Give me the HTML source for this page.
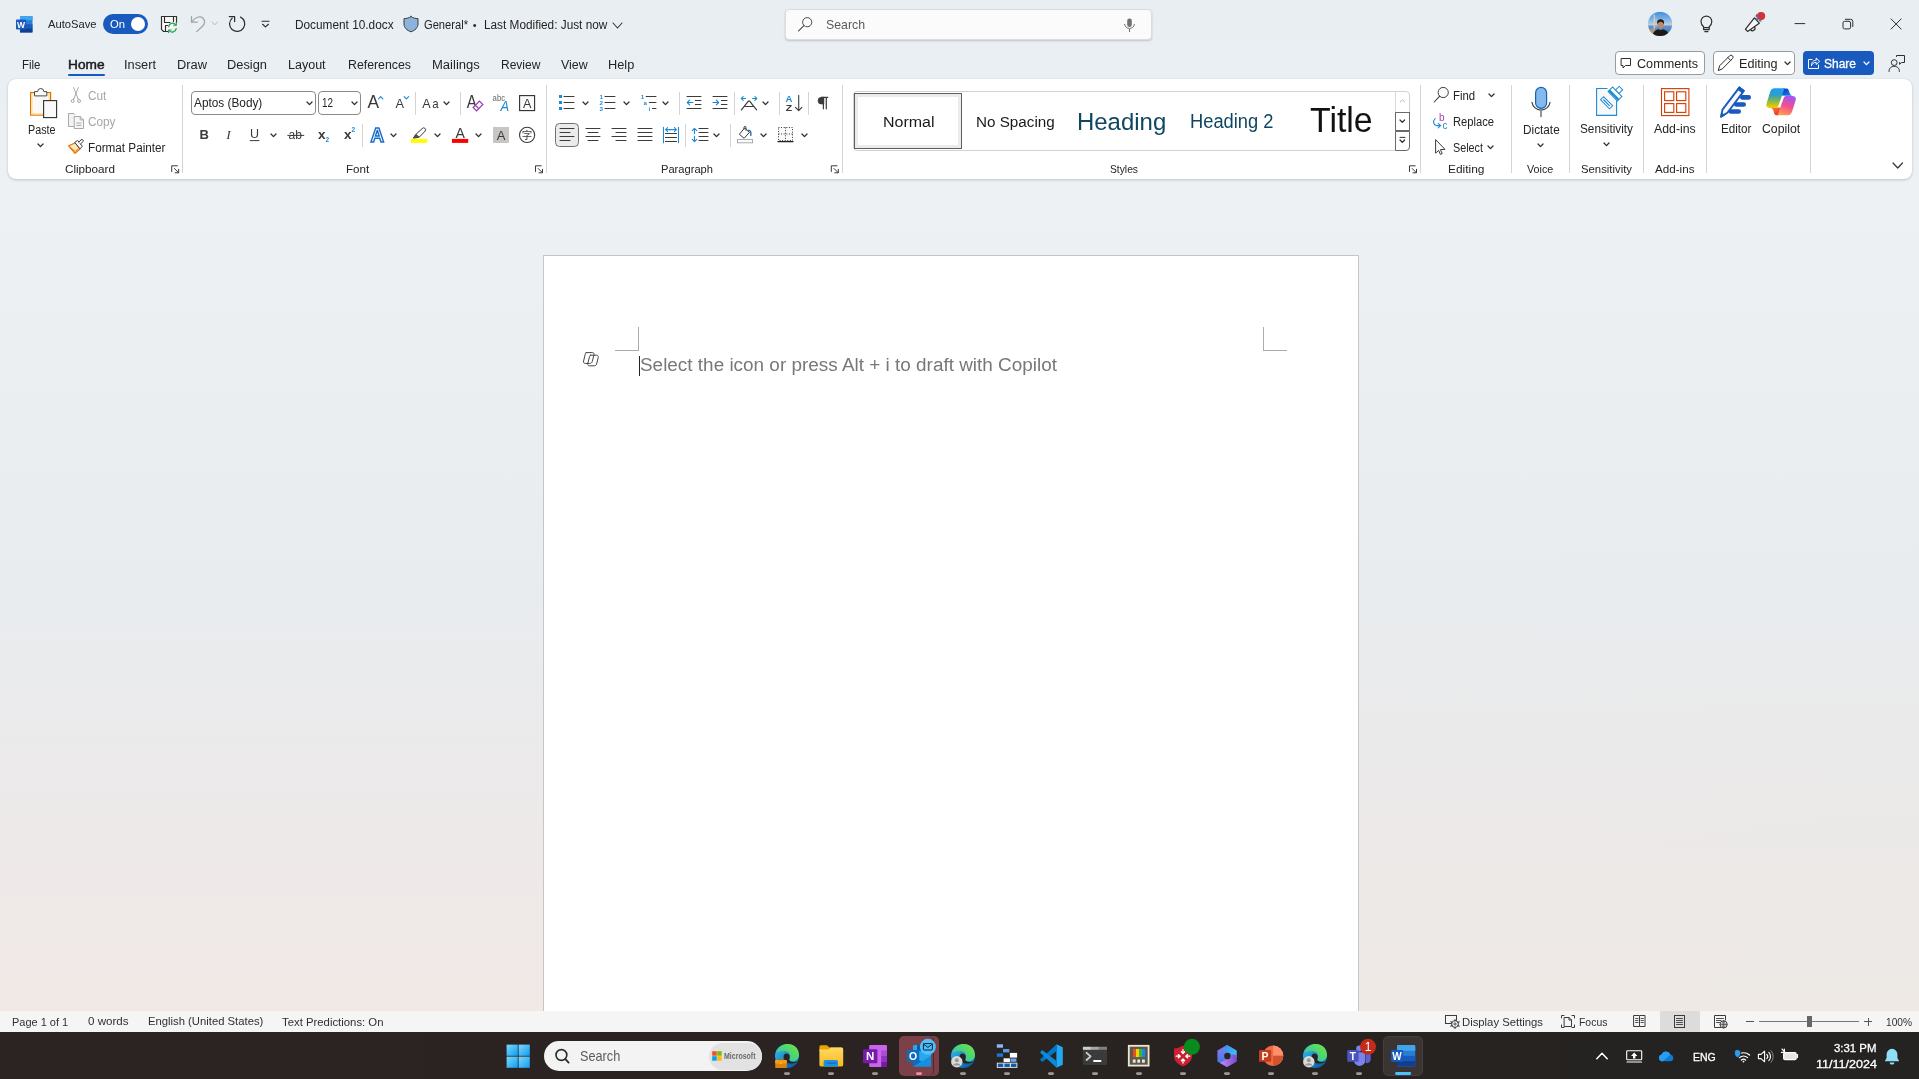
<!DOCTYPE html>
<html lang="en"><head><meta charset="utf-8"><title>Document 10.docx - Word</title>
<style>
html,body{margin:0;padding:0;}
body{width:1919px;height:1079px;overflow:hidden;position:relative;font-family:"Liberation Sans",sans-serif;
background:radial-gradient(ellipse 1300px 520px at 100% 1011px,rgba(226,233,225,.22),rgba(226,233,225,0)),linear-gradient(180deg,#e9eef3 0px,#eaeff3 80px,#edf1f3 190px,#e9ecef 600px,#ede9e9 830px,#f1e9e6 1011px);}
.t{position:absolute;white-space:nowrap;line-height:normal;transform-origin:0 0;}
#root{position:absolute;left:0;top:0;width:1919px;height:1079px;will-change:transform;}
.b{position:absolute;box-sizing:border-box;}
svg{overflow:visible;}
</style></head><body><div id="root">

<div class="b" style="left:8px;top:79px;width:1904px;height:100px;background:#fff;border-radius:8px;box-shadow:0 1px 3px rgba(0,0,0,.18),0 0 1px rgba(0,0,0,.15);"></div>
<div class="b" style="left:543px;top:255px;width:816px;height:760px;background:#fff;border:1px solid #c6c6c6;"></div>
<div class="b" style="left:638px;top:327px;width:1px;height:24px;background:#ababab;"></div>
<div class="b" style="left:615px;top:350px;width:24px;height:1px;background:#ababab;"></div>
<div class="b" style="left:1263px;top:327px;width:1px;height:24px;background:#ababab;"></div>
<div class="b" style="left:1263px;top:350px;width:24px;height:1px;background:#ababab;"></div>
<div class="b" style="left:639px;top:356px;width:1px;height:20px;background:#222;"></div>
<div class="t" style="left:640.00px;top:355px;font-size:18px;color:#787878;transform:scaleX(1.0512);">Select the icon or press Alt + i to draft with Copilot</div>
<div class="b" style="left:0px;top:1011px;width:1919px;height:21px;background:#f5f5f5;"></div>
<div class="b" style="left:0px;top:1032px;width:1919px;height:47px;background:linear-gradient(90deg,#2b2422 0,#2a2321 45%,#262321 75%,#242321 100%);"></div>
<svg class="b" style="left:16px;top:16px;" width="17" height="17" viewBox="0 0 17 17" fill="none"><rect x="4" y="0" width="12.5" height="16.5" rx="1" fill="#2b7cd3"/>
<rect x="4" y="0" width="12.5" height="4.2" fill="#41a5ee"/><rect x="4" y="8.3" width="12.5" height="4.2" fill="#185abd"/><rect x="4" y="12.4" width="12.5" height="4.1" fill="#103f91"/>
<rect x="0" y="3.5" width="10" height="10" rx="1" fill="#185abd"/>
<text x="5" y="11.6" font-family="Liberation Sans, sans-serif" font-size="8.5" font-weight="700" fill="#fff" text-anchor="middle">W</text></svg>
<div class="t" style="left:47.50px;top:18px;font-size:11px;color:#242424;transform:scaleX(1.0167);">AutoSave</div>
<div class="b" style="left:103px;top:13.5px;width:45px;height:20px;background:#185abd;border-radius:10px;"></div>
<div class="t" style="left:110.00px;top:18px;font-size:11px;color:#fff;transform:scaleX(1.0213);">On</div>
<div class="b" style="left:131px;top:17px;width:14px;height:14px;background:#fff;border-radius:7px;"></div>
<div class="t" style="left:295.40px;top:18px;font-size:12px;color:#242424;transform:scaleX(0.9854);">Document 10.docx</div>
<div class="t" style="left:423.50px;top:18px;font-size:12px;color:#242424;transform:scaleX(0.9288);">General*</div>
<div class="t" style="left:472.80px;top:19px;font-size:11px;color:#242424;">•</div>
<div class="t" style="left:483.50px;top:18px;font-size:12px;color:#242424;transform:scaleX(0.9832);">Last Modified: Just now</div>
<svg class="b" style="left:611.5px;top:21.5px;" width="11" height="7" viewBox="0 0 11 7" fill="none"><path d="M1 1 L5.5 6 L10 1" stroke="#333" stroke-width="1.1" stroke-linecap="round" stroke-linejoin="round"/></svg>
<div class="b" style="left:785px;top:8.5px;width:366.5px;height:31px;background:#fbfbfb;border:1px solid #dcdcdc;border-radius:4px;box-shadow:0 1px 2px rgba(0,0,0,.18);"></div>
<div class="t" style="left:826.00px;top:17px;font-size:13px;color:#5a5a5a;transform:scaleX(0.9465);">Search</div>
<div class="b" style="left:1615px;top:51px;width:90px;height:24px;background:#fff;border:1px solid #9a9a9a;border-radius:4px;"></div>
<div class="t" style="left:1636.60px;top:57px;font-size:12.5px;color:#242424;transform:scaleX(1.0093);">Comments</div>
<div class="b" style="left:1713px;top:51px;width:82px;height:24px;background:#fff;border:1px solid #9a9a9a;border-radius:4px;"></div>
<div class="t" style="left:1738.70px;top:57px;font-size:12.5px;color:#242424;transform:scaleX(1.0096);">Editing</div>
<svg class="b" style="left:1784.0px;top:61.2px;" width="7" height="4.6" viewBox="0 0 7 4.6" fill="none"><path d="M1 1 L3.5 3.6 L6 1" stroke="#2e2e2e" stroke-width="1.3" stroke-linecap="round" stroke-linejoin="round"/></svg>
<div class="b" style="left:1803px;top:51px;width:71px;height:24px;background:#185abd;border-radius:4px;"></div>
<div class="t" style="left:1824.00px;top:57px;font-size:12.5px;color:#fff;transform:scaleX(0.9593);-webkit-text-stroke:0.3px #fff;">Share</div>
<svg class="b" style="left:1863.1px;top:61.2px;" width="7" height="4.6" viewBox="0 0 7 4.6" fill="none"><path d="M1 1 L3.5 3.6 L6 1" stroke="#fff" stroke-width="1.3" stroke-linecap="round" stroke-linejoin="round"/></svg>
<div class="t" style="left:22.30px;top:58px;font-size:12px;color:#242424;transform:scaleX(0.9564);">File</div>
<div class="t" style="left:124.00px;top:58px;font-size:12px;color:#242424;transform:scaleX(1.0661);">Insert</div>
<div class="t" style="left:177.00px;top:58px;font-size:12px;color:#242424;transform:scaleX(1.0708);">Draw</div>
<div class="t" style="left:227.00px;top:58px;font-size:12px;color:#242424;transform:scaleX(1.0707);">Design</div>
<div class="t" style="left:288.40px;top:58px;font-size:12px;color:#242424;transform:scaleX(1.0435);">Layout</div>
<div class="t" style="left:347.50px;top:58px;font-size:12px;color:#242424;transform:scaleX(1.0265);">References</div>
<div class="t" style="left:431.60px;top:58px;font-size:12px;color:#242424;transform:scaleX(1.0860);">Mailings</div>
<div class="t" style="left:501.40px;top:58px;font-size:12px;color:#242424;transform:scaleX(1.0010);">Review</div>
<div class="t" style="left:561.00px;top:58px;font-size:12px;color:#242424;transform:scaleX(1.0350);">View</div>
<div class="t" style="left:608.30px;top:58px;font-size:12px;color:#242424;transform:scaleX(1.0653);">Help</div>
<div class="t" style="left:67.50px;top:58px;font-size:12px;color:#1b1b1b;transform:scaleX(1.1401);-webkit-text-stroke:0.45px #1b1b1b;">Home</div>
<div class="b" style="left:67.5px;top:74.2px;width:37px;height:2px;background:#185abd;border-radius:1px;"></div>
<div class="b" style="left:182px;top:84.5px;width:1px;height:88.0px;background:#d4d4d4;"></div>
<div class="b" style="left:546px;top:84.5px;width:1px;height:88.0px;background:#d4d4d4;"></div>
<div class="b" style="left:842px;top:84.5px;width:1px;height:88.0px;background:#d4d4d4;"></div>
<div class="b" style="left:1420px;top:84.5px;width:1px;height:88.0px;background:#d4d4d4;"></div>
<div class="b" style="left:1511px;top:84.5px;width:1px;height:88.0px;background:#d4d4d4;"></div>
<div class="b" style="left:1569px;top:84.5px;width:1px;height:88.0px;background:#d4d4d4;"></div>
<div class="b" style="left:1643px;top:84.5px;width:1px;height:88.0px;background:#d4d4d4;"></div>
<div class="b" style="left:1706px;top:84.5px;width:1px;height:88.0px;background:#d4d4d4;"></div>
<div class="b" style="left:1810px;top:84.5px;width:1px;height:88.0px;background:#d4d4d4;"></div>
<div class="b" style="left:415px;top:91.5px;width:1px;height:23.0px;background:#d4d4d4;"></div>
<div class="b" style="left:460px;top:91.5px;width:1px;height:23.0px;background:#d4d4d4;"></div>
<div class="b" style="left:679px;top:91.5px;width:1px;height:23.0px;background:#d4d4d4;"></div>
<div class="b" style="left:734px;top:91.5px;width:1px;height:23.0px;background:#d4d4d4;"></div>
<div class="b" style="left:779px;top:91.5px;width:1px;height:23.0px;background:#d4d4d4;"></div>
<div class="b" style="left:808px;top:91.5px;width:1px;height:23.0px;background:#d4d4d4;"></div>
<div class="b" style="left:362px;top:123.5px;width:1px;height:23.0px;background:#d4d4d4;"></div>
<div class="b" style="left:685px;top:123.5px;width:1px;height:23.0px;background:#d4d4d4;"></div>
<div class="b" style="left:730px;top:123.5px;width:1px;height:23.0px;background:#d4d4d4;"></div>
<div class="t" style="left:64.70px;top:163px;font-size:11px;color:#242424;transform:scaleX(1.0617);">Clipboard</div>
<div class="t" style="left:345.50px;top:163px;font-size:11px;color:#242424;transform:scaleX(1.0538);">Font</div>
<div class="t" style="left:660.50px;top:163px;font-size:11px;color:#242424;transform:scaleX(1.0122);">Paragraph</div>
<div class="t" style="left:1109.50px;top:163px;font-size:11px;color:#242424;transform:scaleX(0.9343);">Styles</div>
<div class="t" style="left:1448.00px;top:163px;font-size:11px;color:#242424;transform:scaleX(1.0850);">Editing</div>
<div class="t" style="left:1527.00px;top:163px;font-size:11px;color:#242424;transform:scaleX(0.9769);">Voice</div>
<div class="t" style="left:1581.00px;top:163px;font-size:11px;color:#242424;transform:scaleX(1.0297);">Sensitivity</div>
<div class="t" style="left:1655.00px;top:163px;font-size:11px;color:#242424;transform:scaleX(1.0591);">Add-ins</div>
<div class="t" style="left:27.50px;top:123px;font-size:12px;color:#242424;transform:scaleX(0.8961);">Paste</div>
<svg class="b" style="left:37.0px;top:142.7px;" width="7" height="4.6" viewBox="0 0 7 4.6" fill="none"><path d="M1 1 L3.5 3.6 L6 1" stroke="#2e2e2e" stroke-width="1.3" stroke-linecap="round" stroke-linejoin="round"/></svg>
<div class="t" style="left:88.30px;top:89px;font-size:12px;color:#a6a6a6;transform:scaleX(0.9793);">Cut</div>
<div class="t" style="left:88.30px;top:115px;font-size:12px;color:#a6a6a6;transform:scaleX(0.9816);">Copy</div>
<div class="t" style="left:88.30px;top:141px;font-size:12px;color:#242424;transform:scaleX(0.9766);">Format Painter</div>
<div class="b" style="left:191px;top:91.3px;width:124.5px;height:23.4px;background:#fff;border:1px solid #8a8a8a;border-radius:4px;"></div>
<div class="t" style="left:194.20px;top:96px;font-size:12px;color:#242424;transform:scaleX(0.9845);">Aptos (Body)</div>
<svg class="b" style="left:305.5px;top:101.2px;" width="7" height="4.6" viewBox="0 0 7 4.6" fill="none"><path d="M1 1 L3.5 3.6 L6 1" stroke="#2e2e2e" stroke-width="1.3" stroke-linecap="round" stroke-linejoin="round"/></svg>
<div class="b" style="left:318px;top:91.3px;width:43px;height:23.4px;background:#fff;border:1px solid #8a8a8a;border-radius:4px;"></div>
<div class="t" style="left:322.20px;top:96px;font-size:12px;color:#242424;transform:scaleX(0.8234);">12</div>
<svg class="b" style="left:350.5px;top:101.2px;" width="7" height="4.6" viewBox="0 0 7 4.6" fill="none"><path d="M1 1 L3.5 3.6 L6 1" stroke="#2e2e2e" stroke-width="1.3" stroke-linecap="round" stroke-linejoin="round"/></svg>
<div class="b" style="left:853px;top:91px;width:557px;height:60px;background:#fff;border:1px solid #d2d2d2;border-radius:4px;"></div>
<div class="b" style="left:854px;top:93px;width:108px;height:56px;background:#fff;border:1px solid #5f5f5f;box-shadow:inset 0 0 0 3px #ebebeb;"></div>
<div class="t" style="left:882.50px;top:113px;font-size:15.5px;color:#1a1a1a;transform:scaleX(1.0310);">Normal</div>
<div class="t" style="left:976.30px;top:113px;font-size:15.5px;color:#1a1a1a;transform:scaleX(0.9820);">No Spacing</div>
<div class="t" style="left:1076.70px;top:108px;font-size:24.5px;color:#0f4761;transform:scaleX(0.9774);">Heading</div>
<div class="t" style="left:1190.30px;top:110px;font-size:19.5px;color:#0f4761;transform:scaleX(0.9381);">Heading 2</div>
<div class="t" style="left:1310.30px;top:101px;font-size:34.5px;color:#111;transform:scaleX(0.9811);">Title</div>
<div class="b" style="left:1395px;top:92px;width:1px;height:20px;background:#d8d8d8;"></div>
<div class="b" style="left:1395px;top:112px;width:15px;height:19px;background:#fff;border:1px solid #6a6a6a;"></div>
<div class="b" style="left:1395px;top:131px;width:15px;height:20px;background:#fff;border:1px solid #6a6a6a;border-radius:0 0 4px 0;"></div>
<div class="t" style="left:1453.30px;top:89px;font-size:12px;color:#242424;transform:scaleX(0.9510);">Find</div>
<svg class="b" style="left:1488.0px;top:93.2px;" width="7" height="4.6" viewBox="0 0 7 4.6" fill="none"><path d="M1 1 L3.5 3.6 L6 1" stroke="#2e2e2e" stroke-width="1.3" stroke-linecap="round" stroke-linejoin="round"/></svg>
<div class="t" style="left:1453.30px;top:115px;font-size:12px;color:#242424;transform:scaleX(0.9312);">Replace</div>
<div class="t" style="left:1453.30px;top:141px;font-size:12px;color:#242424;transform:scaleX(0.8993);">Select</div>
<svg class="b" style="left:1487.1px;top:145.0px;" width="7" height="4.6" viewBox="0 0 7 4.6" fill="none"><path d="M1 1 L3.5 3.6 L6 1" stroke="#2e2e2e" stroke-width="1.3" stroke-linecap="round" stroke-linejoin="round"/></svg>
<div class="t" style="left:1522.50px;top:123px;font-size:12px;color:#242424;transform:scaleX(0.9824);">Dictate</div>
<svg class="b" style="left:1536.7px;top:143.2px;" width="7" height="4.6" viewBox="0 0 7 4.6" fill="none"><path d="M1 1 L3.5 3.6 L6 1" stroke="#2e2e2e" stroke-width="1.3" stroke-linecap="round" stroke-linejoin="round"/></svg>
<div class="t" style="left:1580.00px;top:122px;font-size:12px;color:#242424;transform:scaleX(0.9809);">Sensitivity</div>
<svg class="b" style="left:1602.8px;top:142.39999999999998px;" width="7" height="4.6" viewBox="0 0 7 4.6" fill="none"><path d="M1 1 L3.5 3.6 L6 1" stroke="#2e2e2e" stroke-width="1.3" stroke-linecap="round" stroke-linejoin="round"/></svg>
<div class="t" style="left:1654.20px;top:122px;font-size:12px;color:#242424;transform:scaleX(1.0249);">Add-ins</div>
<div class="t" style="left:1720.50px;top:122px;font-size:12px;color:#242424;transform:scaleX(0.9726);">Editor</div>
<div class="t" style="left:1761.60px;top:122px;font-size:12px;color:#242424;transform:scaleX(1.0225);">Copilot</div>
<svg class="b" style="left:1891.75px;top:162.0px;" width="11.5" height="7" viewBox="0 0 11.5 7" fill="none"><path d="M1 1 L5.75 6 L10.5 1" stroke="#333" stroke-width="1.2" stroke-linecap="round" stroke-linejoin="round"/></svg>
<div class="t" style="left:11.50px;top:1016px;font-size:11px;color:#303030;transform:scaleX(0.9986);">Page 1 of 1</div>
<div class="t" style="left:88.00px;top:1015px;font-size:11px;color:#303030;transform:scaleX(1.0537);">0 words</div>
<div class="t" style="left:148.40px;top:1015px;font-size:11px;color:#303030;transform:scaleX(1.0249);">English (United States)</div>
<div class="t" style="left:282.00px;top:1016px;font-size:11px;color:#303030;transform:scaleX(1.0311);">Text Predictions: On</div>
<div class="t" style="left:1462.40px;top:1016px;font-size:11px;color:#303030;transform:scaleX(1.0269);">Display Settings</div>
<div class="t" style="left:1578.60px;top:1016px;font-size:11px;color:#303030;transform:scaleX(0.9477);">Focus</div>
<div class="b" style="left:1660px;top:1011px;width:40px;height:21px;background:#dcdcdc;"></div>
<div class="t" style="left:1885.50px;top:1016px;font-size:11px;color:#303030;transform:scaleX(0.9239);">100%</div>
<div class="b" style="left:1746px;top:1021px;width:8px;height:1px;background:#555;"></div>
<div class="b" style="left:1759px;top:1021px;width:100px;height:1px;background:#777;"></div>
<div class="b" style="left:1807px;top:1016px;width:5px;height:11px;background:#666;"></div>
<div class="b" style="left:1864px;top:1021px;width:8px;height:1px;background:#555;"></div>
<div class="b" style="left:1867.5px;top:1017.5px;width:1px;height:8px;background:#555;"></div>
<div class="b" style="left:544px;top:1041px;width:218px;height:30px;background:#f3f3f3;border-radius:15px;"></div>
<div class="t" style="left:580.30px;top:1048px;font-size:14.5px;color:#5c5c5c;transform:scaleX(0.8748);">Search</div>
<div class="b" style="left:708.5px;top:1042.5px;width:53px;height:27px;background:#e2e2e2;border-radius:13.5px;"></div>
<div class="t" style="left:723.80px;top:1051px;font-size:9px;color:#6a6a6a;font-weight:700;transform:scaleX(0.7778);">Microsoft</div>
<div class="t" style="left:1692.60px;top:1051px;font-size:11.5px;color:#fff;transform:scaleX(0.9149);-webkit-text-stroke:0.3px #fff;">ENG</div>
<div class="t" style="left:1833.90px;top:1042px;font-size:11.5px;color:#fff;transform:scaleX(0.9900);-webkit-text-stroke:0.3px #fff;">3:31 PM</div>
<div class="t" style="left:1815.80px;top:1058px;font-size:11.5px;color:#fff;transform:scaleX(1.0920);-webkit-text-stroke:0.3px #fff;">11/11/2024</div>
<svg class="b" style="left:210.55px;top:21.0px;" width="7.5" height="4.8" viewBox="0 0 7.5 4.8" fill="none"><path d="M1 1 L3.75 3.8 L6.5 1" stroke="#b5b5b5" stroke-width="1" stroke-linecap="round" stroke-linejoin="round"/></svg>
<svg class="b" style="left:442.9px;top:101.2px;" width="7" height="4.6" viewBox="0 0 7 4.6" fill="none"><path d="M1 1 L3.5 3.6 L6 1" stroke="#2e2e2e" stroke-width="1.3" stroke-linecap="round" stroke-linejoin="round"/></svg>
<svg class="b" style="left:269.5px;top:133.29999999999998px;" width="7" height="4.6" viewBox="0 0 7 4.6" fill="none"><path d="M1 1 L3.5 3.6 L6 1" stroke="#2e2e2e" stroke-width="1.3" stroke-linecap="round" stroke-linejoin="round"/></svg>
<svg class="b" style="left:389.7px;top:133.1px;" width="7" height="4.6" viewBox="0 0 7 4.6" fill="none"><path d="M1 1 L3.5 3.6 L6 1" stroke="#2e2e2e" stroke-width="1.3" stroke-linecap="round" stroke-linejoin="round"/></svg>
<svg class="b" style="left:433.8px;top:133.1px;" width="7" height="4.6" viewBox="0 0 7 4.6" fill="none"><path d="M1 1 L3.5 3.6 L6 1" stroke="#2e2e2e" stroke-width="1.3" stroke-linecap="round" stroke-linejoin="round"/></svg>
<svg class="b" style="left:474.9px;top:133.1px;" width="7" height="4.6" viewBox="0 0 7 4.6" fill="none"><path d="M1 1 L3.5 3.6 L6 1" stroke="#2e2e2e" stroke-width="1.3" stroke-linecap="round" stroke-linejoin="round"/></svg>
<svg class="b" style="left:581.9px;top:101.2px;" width="7" height="4.6" viewBox="0 0 7 4.6" fill="none"><path d="M1 1 L3.5 3.6 L6 1" stroke="#2e2e2e" stroke-width="1.3" stroke-linecap="round" stroke-linejoin="round"/></svg>
<svg class="b" style="left:622.8px;top:101.2px;" width="7" height="4.6" viewBox="0 0 7 4.6" fill="none"><path d="M1 1 L3.5 3.6 L6 1" stroke="#2e2e2e" stroke-width="1.3" stroke-linecap="round" stroke-linejoin="round"/></svg>
<svg class="b" style="left:661.9px;top:101.2px;" width="7" height="4.6" viewBox="0 0 7 4.6" fill="none"><path d="M1 1 L3.5 3.6 L6 1" stroke="#2e2e2e" stroke-width="1.3" stroke-linecap="round" stroke-linejoin="round"/></svg>
<svg class="b" style="left:761.9px;top:101.3px;" width="7" height="4.6" viewBox="0 0 7 4.6" fill="none"><path d="M1 1 L3.5 3.6 L6 1" stroke="#2e2e2e" stroke-width="1.3" stroke-linecap="round" stroke-linejoin="round"/></svg>
<div class="b" style="left:555px;top:123px;width:24px;height:24px;background:#ebebeb;border:1px solid #707070;border-radius:4.5px;"></div>
<svg class="b" style="left:712.9px;top:133.2px;" width="7" height="4.6" viewBox="0 0 7 4.6" fill="none"><path d="M1 1 L3.5 3.6 L6 1" stroke="#2e2e2e" stroke-width="1.3" stroke-linecap="round" stroke-linejoin="round"/></svg>
<svg class="b" style="left:760.0px;top:133.2px;" width="7" height="4.6" viewBox="0 0 7 4.6" fill="none"><path d="M1 1 L3.5 3.6 L6 1" stroke="#2e2e2e" stroke-width="1.3" stroke-linecap="round" stroke-linejoin="round"/></svg>
<svg class="b" style="left:800.8px;top:133.2px;" width="7" height="4.6" viewBox="0 0 7 4.6" fill="none"><path d="M1 1 L3.5 3.6 L6 1" stroke="#2e2e2e" stroke-width="1.3" stroke-linecap="round" stroke-linejoin="round"/></svg>
<svg class="b" style="left:1399.2px;top:119.39999999999999px;" width="6.6" height="4.4" viewBox="0 0 6.6 4.4" fill="none"><path d="M1 1 L3.3 3.4 L5.6 1" stroke="#2e2e2e" stroke-width="1.25" stroke-linecap="round" stroke-linejoin="round"/></svg>
<svg class="b" style="left:1399.2px;top:139.20000000000002px;" width="6.6" height="4.4" viewBox="0 0 6.6 4.4" fill="none"><path d="M1 1 L3.3 3.4 L5.6 1" stroke="#2e2e2e" stroke-width="1.25" stroke-linecap="round" stroke-linejoin="round"/></svg>
<div class="b" style="left:905px;top:1036px;width:34px;height:40px;background:#7a3f47;border-radius:5px;"></div>
<div class="b" style="left:899px;top:1036px;width:35px;height:40px;background:#7c4048;border-radius:5px;border-right:1px solid #4a2a30;"></div>
<div class="b" style="left:1383px;top:1036px;width:40px;height:40px;background:#3a3533;border-radius:5px;border:1px solid #45403e;"></div>
<svg class="b" style="left:0;top:0" width="1919" height="1079" viewBox="0 0 1919 1079" fill="none"><path d="M168 31.5 H163.6 L161.5 29.4 V16.5 H176.5 V22.4" stroke="#2e2e2e" stroke-width="1.15" fill="#f8f8f8" stroke-linecap="round" stroke-linejoin="round" />
<path d="M164.5 16.5 V22.5 H170 M173.5 16.5 V21.6" stroke="#2e2e2e" stroke-width="1.15" fill="none" stroke-linecap="round" stroke-linejoin="round" />
<path d="M165.5 31 V25.5 H167.6" stroke="#2e2e2e" stroke-width="1.15" fill="none" stroke-linecap="round" stroke-linejoin="round" />
<rect x="162" y="17" width="14" height="14" fill="#f8f8f8" opacity="0"/>
<path d="M168.6 26.6 A4 4 0 0 1 175.6 24.6" stroke="#2ca24c" stroke-width="1.3" fill="none" stroke-linecap="round" stroke-linejoin="round" />
<path d="M176.3 22.6 V25.2 H173.7" stroke="#2ca24c" stroke-width="1.2" fill="none" stroke-linecap="round" stroke-linejoin="round" />
<path d="M176.2 28.6 A4 4 0 0 1 169.2 30.6" stroke="#2ca24c" stroke-width="1.3" fill="none" stroke-linecap="round" stroke-linejoin="round" />
<path d="M168.5 32.6 V30 H171.1" stroke="#2ca24c" stroke-width="1.2" fill="none" stroke-linecap="round" stroke-linejoin="round" />
<path d="M191.5 16.5 V22.2 H197.2" stroke="#a3a3a3" stroke-width="1.25" fill="none" stroke-linecap="round" stroke-linejoin="round" />
<path d="M191.8 22 C195 17 200 15.6 203 18.2 C205.6 20.6 204.8 24 202.5 26.2 L196.6 31.6" stroke="#a3a3a3" stroke-width="1.25" fill="none" stroke-linecap="round" stroke-linejoin="round" />
<path d="M240.6 17.1 A7.6 7.6 0 1 1 232.2 18.1" stroke="#2e2e2e" stroke-width="1.25" fill="none" stroke-linecap="round" stroke-linejoin="round" />
<path d="M229.3 16.5 H234.6 V21.6" stroke="#2e2e2e" stroke-width="1.25" fill="none" stroke-linecap="round" stroke-linejoin="round" />
<path d="M262 21.3 H269" stroke="#2e2e2e" stroke-width="1.1" fill="none" stroke-linecap="round" stroke-linejoin="round" />
<path d="M262.6 24.3 L265.5 26.9 L268.4 24.3" stroke="#2e2e2e" stroke-width="1.2" fill="none" stroke-linecap="round" stroke-linejoin="round" />
<path d="M411 16.6 C413 18 415.5 18.6 418 18.6 V24 C418 27.6 415.2 30.4 411 31.8 C406.8 30.4 404 27.6 404 24 V18.6 C406.5 18.6 409 18 411 16.6 Z" stroke="#3b3b3b" stroke-width="1" fill="#8ab4dc" stroke-linecap="round" stroke-linejoin="round" />
<circle cx="807.2" cy="22.2" r="4.6" fill="none" stroke="#4a4a4a" stroke-width="1" />
<path d="M803.9 25.6 L798.6 30.9" stroke="#4a4a4a" stroke-width="1.1" fill="none" stroke-linecap="round" stroke-linejoin="round" />
<rect x="1127.2" y="18.4" width="4.6" height="8.6" rx="2.3" fill="#707070" stroke="none" stroke-width="0" />
<path d="M1124.6 24.4 A5 5 0 0 0 1134.4 24.4" stroke="#707070" stroke-width="1" fill="none" stroke-linecap="round" stroke-linejoin="round" />
<path d="M1129.5 29.4 V31.6" stroke="#707070" stroke-width="1" fill="none" stroke-linecap="round" stroke-linejoin="round" />
<defs><clipPath id="av"><circle cx="1660.1" cy="23.9" r="12.1"/></clipPath>
<linearGradient id="sky" x1="0" y1="0" x2="0" y2="1"><stop offset="0" stop-color="#3f8de0"/><stop offset="0.45" stop-color="#9fc3e8"/><stop offset="0.52" stop-color="#c9cdd4"/><stop offset="0.6" stop-color="#5f94cf"/><stop offset="1" stop-color="#3d6fae"/></linearGradient></defs>
<g clip-path="url(#av)"><rect x="1648" y="11.8" width="24.3" height="24.3" fill="url(#sky)"/>
<rect x="1653.6" y="14.5" width="1.2" height="16" fill="#d9d2c4"/><rect x="1655.6" y="18" width="0.8" height="10" fill="#cfc8ba"/>
<path d="M1648 30 L1653 28 L1656 30 L1656 36 H1648Z" fill="#a99a80"/>
<ellipse cx="1660.6" cy="22.5" rx="3.3" ry="3.3" fill="#2a1d17"/>
<ellipse cx="1660.6" cy="25" rx="2.7" ry="3.3" fill="#c08a68"/>
<path d="M1657.4 23 Q1660.6 19.5 1663.9 23 L1663.8 21.6 Q1660.6 18 1657.4 21.6Z" fill="#2a1d17"/>
<path d="M1652 36.5 Q1653 30.5 1658.5 29.3 L1660.6 30.3 L1662.7 29.3 Q1668.5 30.5 1669.5 36.5Z" fill="#1f1815"/></g>
<path d="M1703.6 26.8 C1701.6 25.2 1701 23.4 1701 21.5 A5.4 5.4 0 0 1 1711.8 21.5 C1711.8 23.4 1711.2 25.2 1709.2 26.8 V29.6 H1703.6 Z" stroke="#2e2e2e" stroke-width="1.2" fill="none" stroke-linecap="round" stroke-linejoin="round" />
<path d="M1703.8 27.6 H1709" stroke="#2e2e2e" stroke-width="1.1" fill="none" stroke-linecap="round" stroke-linejoin="round" />
<path d="M1704.8 31.6 H1708" stroke="#2e2e2e" stroke-width="1.1" fill="none" stroke-linecap="round" stroke-linejoin="round" />
<path d="M1754.4 17.8 L1759.3 23.2 L1747.6 31.4 L1745.5 29.2 Z" stroke="#2e2e2e" stroke-width="1.25" fill="#f7f7f7" stroke-linecap="round" stroke-linejoin="round" />
<path d="M1750.6 29.6 A2.2 2.2 0 0 0 1754.6 27" stroke="#2e2e2e" stroke-width="1.2" fill="none" stroke-linecap="round" stroke-linejoin="round" />
<path d="M1756.5 15 A4.7 4.7 0 0 0 1761.6 20.9" stroke="#1e6fd0" stroke-width="1.3" fill="none" stroke-linecap="round" stroke-linejoin="round" stroke-dasharray="1.6 1.8" stroke-linecap="butt"/>
<circle cx="1761.1" cy="16.1" r="4.1" fill="#d13438" stroke="none" stroke-width="1" />
<path d="M1795 23.6 H1804.8" stroke="#2e2e2e" stroke-width="1" fill="none" stroke-linecap="round" stroke-linejoin="round" />
<rect x="1843" y="21.3" width="7.6" height="7.6" rx="1.6" fill="none" stroke="#2e2e2e" stroke-width="1" />
<path d="M1845.4 19.3 H1850.6 A2.2 2.2 0 0 1 1852.8 21.5 V26.6" stroke="#2e2e2e" stroke-width="1" fill="none" stroke-linecap="round" stroke-linejoin="round" />
<path d="M1891 18.9 L1901.2 29.1 M1901.2 18.9 L1891 29.1" stroke="#2e2e2e" stroke-width="1" fill="none" stroke-linecap="round" stroke-linejoin="round" />
<path d="M1621.5 58.5 H1630.5 V65.5 H1625.5 L1623 68 V65.5 H1621.5 Z" stroke="#2e2e2e" stroke-width="1" fill="none" stroke-linecap="round" stroke-linejoin="round" />
<path d="M1718.4 70.2 L1719.6 65.8 L1729.6 55.8 A1.9 1.9 0 0 1 1732.5 58.6 L1722.5 68.7 Z" stroke="#2e2e2e" stroke-width="1" fill="none" stroke-linecap="round" stroke-linejoin="round" />
<path d="M1727.9 57.6 L1730.7 60.4" stroke="#2e2e2e" stroke-width="1" fill="none" stroke-linecap="round" stroke-linejoin="round" />
<path d="M1812 59.5 H1808.5 V68.5 H1818.5 V65" stroke="#fff" stroke-width="1" fill="none" stroke-linecap="round" stroke-linejoin="round" />
<path d="M1811.5 65.5 C1811.5 62 1813.5 60.3 1816.2 60.3 V58 L1819.6 61.3 L1816.2 64.5 V62.4 C1813.8 62.4 1812.5 63.3 1811.5 65.5 Z" stroke="#fff" stroke-width="1" fill="none" stroke-linecap="round" stroke-linejoin="round" />
<circle cx="1894.2" cy="62.6" r="2.9" fill="none" stroke="#2e2e2e" stroke-width="1" />
<path d="M1889 71.5 C1889 67.6 1891.4 66.4 1894.2 66.4 C1897 66.4 1899.4 67.6 1899.4 71.5" stroke="#2e2e2e" stroke-width="1" fill="none" stroke-linecap="round" stroke-linejoin="round" />
<path d="M1896.5 56.5 V55.5 H1904.5 V62.5 H1901.5 L1899.6 64.4 V62.5" stroke="#2e2e2e" stroke-width="1" fill="none" stroke-linecap="round" stroke-linejoin="round" />
<rect x="30.6" y="92.6" width="20" height="22.5" rx="0" fill="#f9f9f9" stroke="#e07000" stroke-width="1.2" />
<rect x="31.9" y="93.9" width="17.4" height="19.9" rx="0" fill="none" stroke="#fbdf9a" stroke-width="1.4" />
<path d="M34.5 95.5 V91.6 H37.6 A3.1 3.1 0 0 1 43.8 91.6 H46.8 V95.5 Z" stroke="#4a4a4a" stroke-width="1" fill="#fafafa" stroke-linecap="round" stroke-linejoin="round" />
<rect x="43.6" y="100.6" width="13" height="17" rx="0" fill="#fafafa" stroke="#2e2e2e" stroke-width="1.1" />
<path d="M73.6 87.6 L78 98.6 M78.3 87.6 L73.9 98.6" stroke="#a8a8a8" stroke-width="1" fill="none" stroke-linecap="round" stroke-linejoin="round" />
<circle cx="72.7" cy="101" r="1.5" fill="none" stroke="#a8a8a8" stroke-width="1" />
<circle cx="79" cy="101" r="1.5" fill="none" stroke="#a8a8a8" stroke-width="1" />
<path d="M73.9 98.6 L73.2 99.7 M78 98.6 L78.6 99.7" stroke="#a8a8a8" stroke-width="1" fill="none" stroke-linecap="round" stroke-linejoin="round" />
<path d="M74 126.5 H68.5 V113.5 H74 L75 114.5" stroke="#a8a8a8" stroke-width="1" fill="#f3f3f3" stroke-linecap="round" stroke-linejoin="round" />
<path d="M74.6 116.5 H80.2 L83.5 119.8 V128.5 H74.6 Z" stroke="#a8a8a8" stroke-width="1" fill="#f6f6f6" stroke-linecap="round" stroke-linejoin="round" />
<path d="M80.2 116.5 V119.8 H83.5" stroke="#a8a8a8" stroke-width="1" fill="none" stroke-linecap="round" stroke-linejoin="round" />
<path d="M76.8 123 H81 M76.8 125.4 H81" stroke="#a8a8a8" stroke-width="1" fill="none" stroke-linecap="round" stroke-linejoin="round" />
<path d="M75.6 142.8 L68.6 145.8 L75 153.4 L80 149 Z" stroke="#e07000" stroke-width="1.1" fill="#fde8c0" stroke-linecap="round" stroke-linejoin="round" />
<path d="M70.5 147.5 L75.2 151.5 L77.8 148.8" stroke="#e07000" stroke-width="1" fill="none" stroke-linecap="round" stroke-linejoin="round" />
<path d="M75 142.2 L77.6 140.4 L82.4 146.2 L80.2 148.6 Z" stroke="#3a3a3a" stroke-width="1" fill="#fff" stroke-linecap="round" stroke-linejoin="round" />
<path d="M78.8 142 L82 139.2 L83.6 141 L80.5 144" stroke="#3a3a3a" stroke-width="1" fill="#fff" stroke-linecap="round" stroke-linejoin="round" />
<path d="M171.7 171.5 V165.8 H177.39999999999998" stroke="#3a3a3a" stroke-width="1" fill="none" stroke-linecap="round" stroke-linejoin="round" />
<path d="M174.39999999999998 168.5 L178.6 172.70000000000002 M178.7 169.3 V172.8 H175.2" stroke="#3a3a3a" stroke-width="1" fill="none" stroke-linecap="round" stroke-linejoin="round" />
<text x="367.6" y="108" font-family="Liberation Sans, sans-serif" font-size="18.2" font-weight="400" fill="#3a3a3a" text-anchor="start" textLength="11.6" lengthAdjust="spacingAndGlyphs">A</text>
<path d="M378.6 98.8 L380.7 96.7 L382.8 98.8" stroke="#1e8ad6" stroke-width="1.2" fill="none" stroke-linecap="round" stroke-linejoin="round" />
<text x="395.4" y="108" font-family="Liberation Sans, sans-serif" font-size="12.8" font-weight="400" fill="#3a3a3a" text-anchor="start" >A</text>
<path d="M404.2 96.6 L406.4 98.8 L408.6 96.6" stroke="#1e8ad6" stroke-width="1.2" fill="none" stroke-linecap="round" stroke-linejoin="round" />
<text x="422.3" y="107.9" font-family="Liberation Sans, sans-serif" font-size="13.6" font-weight="400" fill="#3a3a3a" text-anchor="start" textLength="8.4" lengthAdjust="spacingAndGlyphs">A</text>
<text x="432.2" y="107.9" font-family="Liberation Sans, sans-serif" font-size="13.6" font-weight="400" fill="#3a3a3a" text-anchor="start" textLength="6.4" lengthAdjust="spacingAndGlyphs">a</text>
<text x="466.8" y="108" font-family="Liberation Sans, sans-serif" font-size="18.2" font-weight="400" fill="#3a3a3a" text-anchor="start" textLength="10" lengthAdjust="spacingAndGlyphs">A</text>
<g transform="rotate(-45 478 106)"><rect x="473.6" y="103.6" width="8.8" height="4.8" fill="#fff" stroke="#9a3ab0" stroke-width="1.2"/><path d="M476.6 103.6 V108.4" stroke="#9a3ab0" stroke-width="1.2"/></g>
<text x="492.6" y="101.2" font-family="Liberation Sans, sans-serif" font-size="8.5" font-weight="400" fill="#666" text-anchor="start" textLength="12.6" lengthAdjust="spacingAndGlyphs">abc</text>
<text x="500.6" y="111" font-family="Liberation Sans, sans-serif" font-size="15" font-weight="400" fill="#1e8ad6" text-anchor="start" font-style="italic" textLength="8.6" lengthAdjust="spacingAndGlyphs">A</text>
<rect x="519.6" y="95.6" width="15" height="15" rx="0" fill="#fafafa" stroke="#2e2e2e" stroke-width="1.1" />
<text x="527.1" y="107.6" font-family="Liberation Sans, sans-serif" font-size="12.6" font-weight="400" fill="#3a3a3a" text-anchor="middle" >A</text>
<text x="199.5" y="139" font-family="Liberation Sans, sans-serif" font-size="13" font-weight="700" fill="#3a3a3a" text-anchor="start" >B</text>
<text x="226.2" y="139" font-family="Liberation Serif, serif" font-size="13.5" font-weight="400" fill="#3a3a3a" text-anchor="start" font-style="italic">I</text>
<text x="250" y="138.2" font-family="Liberation Sans, sans-serif" font-size="12.5" font-weight="400" fill="#3a3a3a" text-anchor="start" >U</text>
<path d="M250.2 140.6 H259" stroke="#3a3a3a" stroke-width="1" fill="none" stroke-linecap="round" stroke-linejoin="round" />
<text x="288.6" y="139.2" font-family="Liberation Sans, sans-serif" font-size="12.5" font-weight="400" fill="#3a3a3a" text-anchor="start" textLength="13.4" lengthAdjust="spacingAndGlyphs">ab</text>
<path d="M287.8 135.4 H303.8" stroke="#3a3a3a" stroke-width="1" fill="none" stroke-linecap="round" stroke-linejoin="round" />
<text x="318" y="139.4" font-family="Liberation Sans, sans-serif" font-size="13.5" font-weight="700" fill="#3a3a3a" text-anchor="start" >x</text>
<text x="325.4" y="142.2" font-family="Liberation Sans, sans-serif" font-size="6.5" font-weight="700" fill="#1e8ad6" text-anchor="start" >2</text>
<text x="344" y="139.4" font-family="Liberation Sans, sans-serif" font-size="13.5" font-weight="700" fill="#3a3a3a" text-anchor="start" >x</text>
<text x="351.4" y="132" font-family="Liberation Sans, sans-serif" font-size="6.5" font-weight="700" fill="#1e8ad6" text-anchor="start" >2</text>
<text x="377.2" y="141.6" font-family="Liberation Sans, sans-serif" font-size="19.6" font-weight="700" fill="#fff" text-anchor="middle" stroke="#1a6fc9" stroke-width="1.5" textLength="13.6" lengthAdjust="spacingAndGlyphs">A</text>
<path d="M414 137.4 L416.2 134 L422.2 128.6 A1.7 1.7 0 0 1 425.2 131 L419.4 137 L416.4 137.6 Z" stroke="#3a3a3a" stroke-width="1" fill="#fdfdfd" stroke-linecap="round" stroke-linejoin="round" />
<path d="M413.4 137.8 L416 134.2 L419.2 137 L416.4 137.8 Z" stroke="#3a3a3a" stroke-width="0.6" fill="#555" stroke-linecap="round" stroke-linejoin="round" />
<rect x="411" y="138.9" width="16.2" height="4" rx="0" fill="#ffff00" stroke="none" stroke-width="1" />
<text x="460.2" y="137.8" font-family="Liberation Sans, sans-serif" font-size="15" font-weight="400" fill="#3a3a3a" text-anchor="middle" textLength="9.4" lengthAdjust="spacingAndGlyphs">A</text>
<rect x="452" y="138.9" width="16.2" height="4" rx="0" fill="#ff0000" stroke="none" stroke-width="1" />
<rect x="493" y="127" width="16" height="16" rx="0" fill="#c8c6c4" stroke="none" stroke-width="1" />
<text x="501" y="139.7" font-family="Liberation Sans, sans-serif" font-size="13" font-weight="400" fill="#3a3a3a" text-anchor="middle" >A</text>
<circle cx="527.1" cy="134.9" r="7.6" fill="none" stroke="#3a3a3a" stroke-width="1.1" />
<text x="527.1" y="138.7" font-family="Liberation Sans, Noto Sans CJK SC, sans-serif" font-size="10.5" font-weight="400" fill="#3a3a3a" text-anchor="middle" >字</text>
<path d="M535.5 171.5 V165.8 H541.2" stroke="#3a3a3a" stroke-width="1" fill="none" stroke-linecap="round" stroke-linejoin="round" />
<path d="M538.2 168.5 L542.4 172.70000000000002 M542.5 169.3 V172.8 H539" stroke="#3a3a3a" stroke-width="1" fill="none" stroke-linecap="round" stroke-linejoin="round" />
<rect x="559" y="95.0" width="3" height="3" rx="0" fill="#1e8ad6" stroke="none" stroke-width="1" />
<path d="M564 96.5 H574" stroke="#3b3b3b" stroke-width="1" fill="none" stroke-linecap="round" stroke-linejoin="round" stroke-linecap="butt"/>
<rect x="559" y="101.0" width="3" height="3" rx="0" fill="#1e8ad6" stroke="none" stroke-width="1" />
<path d="M564 102.5 H574" stroke="#3b3b3b" stroke-width="1" fill="none" stroke-linecap="round" stroke-linejoin="round" stroke-linecap="butt"/>
<rect x="559" y="107.0" width="3" height="3" rx="0" fill="#1e8ad6" stroke="none" stroke-width="1" />
<path d="M564 108.5 H574" stroke="#3b3b3b" stroke-width="1" fill="none" stroke-linecap="round" stroke-linejoin="round" stroke-linecap="butt"/>
<text x="599.6" y="98.7" font-family="Liberation Sans, sans-serif" font-size="6.2" font-weight="700" fill="#1e8ad6" text-anchor="start" >1</text>
<path d="M605 96.5 H615" stroke="#3b3b3b" stroke-width="1" fill="none" stroke-linecap="round" stroke-linejoin="round" stroke-linecap="butt"/>
<text x="599.6" y="104.7" font-family="Liberation Sans, sans-serif" font-size="6.2" font-weight="700" fill="#1e8ad6" text-anchor="start" >2</text>
<path d="M605 102.5 H615" stroke="#3b3b3b" stroke-width="1" fill="none" stroke-linecap="round" stroke-linejoin="round" stroke-linecap="butt"/>
<text x="599.6" y="110.7" font-family="Liberation Sans, sans-serif" font-size="6.2" font-weight="700" fill="#1e8ad6" text-anchor="start" >3</text>
<path d="M605 108.5 H615" stroke="#3b3b3b" stroke-width="1" fill="none" stroke-linecap="round" stroke-linejoin="round" stroke-linecap="butt"/>
<text x="640.8" y="98.7" font-family="Liberation Sans, sans-serif" font-size="6.2" font-weight="700" fill="#1e8ad6" text-anchor="start" >1</text>
<path d="M646.2 96.5 H656" stroke="#3b3b3b" stroke-width="1" fill="none" stroke-linecap="round" stroke-linejoin="round" stroke-linecap="butt"/>
<text x="643.6" y="104.6" font-family="Liberation Sans, sans-serif" font-size="6.2" font-weight="700" fill="#1e8ad6" text-anchor="start" >a</text>
<path d="M649.3 102.5 H656" stroke="#3b3b3b" stroke-width="1" fill="none" stroke-linecap="round" stroke-linejoin="round" stroke-linecap="butt"/>
<text x="648.6" y="110.7" font-family="Liberation Sans, sans-serif" font-size="6.2" font-weight="700" fill="#1e8ad6" text-anchor="start" >i</text>
<path d="M652.4 108.5 H656" stroke="#3b3b3b" stroke-width="1" fill="none" stroke-linecap="round" stroke-linejoin="round" stroke-linecap="butt"/>
<path d="M687 96.5 H701" stroke="#3b3b3b" stroke-width="1" fill="none" stroke-linecap="round" stroke-linejoin="round" stroke-linecap="butt"/>
<path d="M687 108.5 H701" stroke="#3b3b3b" stroke-width="1" fill="none" stroke-linecap="round" stroke-linejoin="round" stroke-linecap="butt"/>
<path d="M695.3 100.5 H701" stroke="#3b3b3b" stroke-width="1" fill="none" stroke-linecap="round" stroke-linejoin="round" stroke-linecap="butt"/>
<path d="M695.3 104.5 H701" stroke="#3b3b3b" stroke-width="1" fill="none" stroke-linecap="round" stroke-linejoin="round" stroke-linecap="butt"/>
<path d="M692.8 102.5 H687.3 M689.6 100.2 L687.3 102.5 L689.6 104.8" stroke="#1e8ad6" stroke-width="1.2" fill="none" stroke-linecap="round" stroke-linejoin="round" />
<path d="M713 96.5 H727" stroke="#3b3b3b" stroke-width="1" fill="none" stroke-linecap="round" stroke-linejoin="round" stroke-linecap="butt"/>
<path d="M713 108.5 H727" stroke="#3b3b3b" stroke-width="1" fill="none" stroke-linecap="round" stroke-linejoin="round" stroke-linecap="butt"/>
<path d="M721.3 100.5 H727" stroke="#3b3b3b" stroke-width="1" fill="none" stroke-linecap="round" stroke-linejoin="round" stroke-linecap="butt"/>
<path d="M721.3 104.5 H727" stroke="#3b3b3b" stroke-width="1" fill="none" stroke-linecap="round" stroke-linejoin="round" stroke-linecap="butt"/>
<path d="M713 102.5 H718.6 M716.3 100.2 L718.6 102.5 L716.3 104.8" stroke="#1e8ad6" stroke-width="1.2" fill="none" stroke-linecap="round" stroke-linejoin="round" />
<path d="M745.6 98.5 H741.4 M743.2 96.7 L741.4 98.5 L743.2 100.3" stroke="#1e8ad6" stroke-width="1.1" fill="none" stroke-linecap="round" stroke-linejoin="round" />
<path d="M752.4 98.5 H756.7 M754.9 96.7 L756.7 98.5 L754.9 100.3" stroke="#1e8ad6" stroke-width="1.1" fill="none" stroke-linecap="round" stroke-linejoin="round" />
<path d="M741.4 109.8 L748.4 101.2 H749.6 L756.6 109.8 M744.6 106.5 H753.4" stroke="#3b3b3b" stroke-width="1.2" fill="none" stroke-linecap="round" stroke-linejoin="round" />
<text x="785.6" y="101.8" font-family="Liberation Sans, sans-serif" font-size="9.6" font-weight="700" fill="#1e8ad6" text-anchor="start" >A</text>
<text x="785.8" y="110.9" font-family="Liberation Sans, sans-serif" font-size="9.4" font-weight="700" fill="#3b3b3b" text-anchor="start" textLength="6.4" lengthAdjust="spacingAndGlyphs">Z</text>
<path d="M798.7 95.4 V110.6 M795.5 107.4 L798.7 110.6 L801.9 107.4" stroke="#3b3b3b" stroke-width="1.1" fill="none" stroke-linecap="round" stroke-linejoin="round" />
<path d="M823.5 97.3 H821.4 A3.4 3.4 0 0 0 821.4 104.1 H823.5 Z" stroke="#3b3b3b" stroke-width="0.6" fill="#3b3b3b" stroke-linecap="round" stroke-linejoin="round" />
<path d="M823.4 97.3 V108.8 M826.3 97.3 V108.8 M821.5 97.3 H827.8" stroke="#3b3b3b" stroke-width="1.2" fill="none" stroke-linecap="round" stroke-linejoin="round" stroke-linecap="butt"/>
<path d="M560 128.5 H574" stroke="#3b3b3b" stroke-width="1" fill="none" stroke-linecap="round" stroke-linejoin="round" stroke-linecap="butt"/>
<path d="M586 128.5 H600" stroke="#3b3b3b" stroke-width="1" fill="none" stroke-linecap="round" stroke-linejoin="round" stroke-linecap="butt"/>
<path d="M612 128.5 H626" stroke="#3b3b3b" stroke-width="1" fill="none" stroke-linecap="round" stroke-linejoin="round" stroke-linecap="butt"/>
<path d="M638 128.5 H652" stroke="#3b3b3b" stroke-width="1" fill="none" stroke-linecap="round" stroke-linejoin="round" stroke-linecap="butt"/>
<path d="M560 132.5 H570" stroke="#3b3b3b" stroke-width="1" fill="none" stroke-linecap="round" stroke-linejoin="round" stroke-linecap="butt"/>
<path d="M588 132.5 H598" stroke="#3b3b3b" stroke-width="1" fill="none" stroke-linecap="round" stroke-linejoin="round" stroke-linecap="butt"/>
<path d="M616 132.5 H626" stroke="#3b3b3b" stroke-width="1" fill="none" stroke-linecap="round" stroke-linejoin="round" stroke-linecap="butt"/>
<path d="M638 132.5 H652" stroke="#3b3b3b" stroke-width="1" fill="none" stroke-linecap="round" stroke-linejoin="round" stroke-linecap="butt"/>
<path d="M560 136.5 H574" stroke="#3b3b3b" stroke-width="1" fill="none" stroke-linecap="round" stroke-linejoin="round" stroke-linecap="butt"/>
<path d="M586 136.5 H600" stroke="#3b3b3b" stroke-width="1" fill="none" stroke-linecap="round" stroke-linejoin="round" stroke-linecap="butt"/>
<path d="M612 136.5 H626" stroke="#3b3b3b" stroke-width="1" fill="none" stroke-linecap="round" stroke-linejoin="round" stroke-linecap="butt"/>
<path d="M638 136.5 H652" stroke="#3b3b3b" stroke-width="1" fill="none" stroke-linecap="round" stroke-linejoin="round" stroke-linecap="butt"/>
<path d="M560 140.5 H570" stroke="#3b3b3b" stroke-width="1" fill="none" stroke-linecap="round" stroke-linejoin="round" stroke-linecap="butt"/>
<path d="M588 140.5 H598" stroke="#3b3b3b" stroke-width="1" fill="none" stroke-linecap="round" stroke-linejoin="round" stroke-linecap="butt"/>
<path d="M616 140.5 H626" stroke="#3b3b3b" stroke-width="1" fill="none" stroke-linecap="round" stroke-linejoin="round" stroke-linecap="butt"/>
<path d="M638 140.5 H652" stroke="#3b3b3b" stroke-width="1" fill="none" stroke-linecap="round" stroke-linejoin="round" stroke-linecap="butt"/>
<path d="M663.5 127.4 V142.8 M678.5 127.4 V142.8" stroke="#1e8ad6" stroke-width="1.1" fill="none" stroke-linecap="round" stroke-linejoin="round" stroke-linecap="butt"/>
<path d="M665.6 129.6 H676.4 M667.6 127.6 L665.6 129.6 L667.6 131.6 M674.4 127.6 L676.4 129.6 L674.4 131.6" stroke="#1e8ad6" stroke-width="1.1" fill="none" stroke-linecap="round" stroke-linejoin="round" />
<path d="M665.4 133.5 H676.6" stroke="#3b3b3b" stroke-width="1" fill="none" stroke-linecap="round" stroke-linejoin="round" stroke-linecap="butt"/>
<path d="M665.4 137.5 H676.6" stroke="#3b3b3b" stroke-width="1" fill="none" stroke-linecap="round" stroke-linejoin="round" stroke-linecap="butt"/>
<path d="M665.4 141.5 H676.6" stroke="#3b3b3b" stroke-width="1" fill="none" stroke-linecap="round" stroke-linejoin="round" stroke-linecap="butt"/>
<path d="M694.5 128.4 V133.6 M692.2 130.7 L694.5 128.4 L696.8 130.7" stroke="#1e8ad6" stroke-width="1.1" fill="none" stroke-linecap="round" stroke-linejoin="round" />
<path d="M694.5 136.4 V141.6 M692.2 139.3 L694.5 141.6 L696.8 139.3" stroke="#1e8ad6" stroke-width="1.1" fill="none" stroke-linecap="round" stroke-linejoin="round" />
<path d="M699 128.5 H708" stroke="#3b3b3b" stroke-width="1" fill="none" stroke-linecap="round" stroke-linejoin="round" stroke-linecap="butt"/>
<path d="M699 132.5 H708" stroke="#3b3b3b" stroke-width="1" fill="none" stroke-linecap="round" stroke-linejoin="round" stroke-linecap="butt"/>
<path d="M699 136.5 H708" stroke="#3b3b3b" stroke-width="1" fill="none" stroke-linecap="round" stroke-linejoin="round" stroke-linecap="butt"/>
<path d="M699 140.5 H708" stroke="#3b3b3b" stroke-width="1" fill="none" stroke-linecap="round" stroke-linejoin="round" stroke-linecap="butt"/>
<path d="M739.6 134 L744.6 128 L749.4 132.4 L744.4 138 Z" stroke="#3b3b3b" stroke-width="1" fill="#fdfdfd" stroke-linecap="round" stroke-linejoin="round" />
<path d="M744 129 V127.4 A1 1 0 0 1 746 127.4 V130.2" stroke="#3b3b3b" stroke-width="1" fill="none" stroke-linecap="round" stroke-linejoin="round" />
<path d="M748.6 130.2 C750.4 130.6 751.2 132.6 750.8 135.4" stroke="#1664b4" stroke-width="1.3" fill="none" stroke-linecap="round" stroke-linejoin="round" />
<rect x="737.4" y="139.6" width="15.2" height="3.2" rx="0" fill="#fff" stroke="#a0a0a0" stroke-width="0.9" />
<rect x="778.5" y="127.5" width="14" height="13" fill="#fafafa" stroke="#333" stroke-width="1" stroke-dasharray="1 1.6"/>
<path d="M785.5 127.5 V140.5 M778.5 134 H792.5" stroke="#333" stroke-width="1" stroke-dasharray="1 1.6"/>
<path d="M778 141.6 H793" stroke="#222" stroke-width="1.3" fill="none" stroke-linecap="round" stroke-linejoin="round" stroke-linecap="butt"/>
<path d="M831.3 171.5 V165.8 H837.0" stroke="#3a3a3a" stroke-width="1" fill="none" stroke-linecap="round" stroke-linejoin="round" />
<path d="M834.0 168.5 L838.1999999999999 172.70000000000002 M838.3 169.3 V172.8 H834.8" stroke="#3a3a3a" stroke-width="1" fill="none" stroke-linecap="round" stroke-linejoin="round" />
<path d="M1400.2 102 L1402.5 99.8 L1404.8 102" stroke="#b8b8b8" stroke-width="1" fill="none" stroke-linecap="round" stroke-linejoin="round" />
<path d="M1400 137.4 H1405" stroke="#333" stroke-width="1" fill="none" stroke-linecap="round" stroke-linejoin="round" />
<path d="M1409.5 171.5 V165.8 H1415.2" stroke="#3a3a3a" stroke-width="1" fill="none" stroke-linecap="round" stroke-linejoin="round" />
<path d="M1412.2 168.5 L1416.4 172.70000000000002 M1416.5 169.3 V172.8 H1413" stroke="#3a3a3a" stroke-width="1" fill="none" stroke-linecap="round" stroke-linejoin="round" />
<circle cx="1443.2" cy="92.5" r="5.1" fill="#fbfbfb" stroke="#3b3b3b" stroke-width="1" />
<path d="M1439.5 96.3 L1434.2 102" stroke="#3b3b3b" stroke-width="1.1" fill="none" stroke-linecap="round" stroke-linejoin="round" />
<text x="1439" y="120.7" font-family="Liberation Sans, sans-serif" font-size="10" font-weight="400" fill="#a83cb8" text-anchor="start" >b</text>
<text x="1442.6" y="128.6" font-family="Liberation Sans, sans-serif" font-size="10" font-weight="400" fill="#1e8ad6" text-anchor="start" >c</text>
<path d="M1435.2 118.6 C1432.8 120.6 1432.8 124.4 1436.4 125.6 H1440.4 M1438.2 123.4 L1440.6 125.6 L1438.2 127.8" stroke="#1e8ad6" stroke-width="1.1" fill="none" stroke-linecap="round" stroke-linejoin="round" />
<path d="M1435.6 140 V153.2 L1438.6 150.4 L1440.4 154.4 L1442.2 153.6 L1440.4 149.6 L1444.6 149.4 Z" stroke="#3b3b3b" stroke-width="1" fill="#fdfdfd" stroke-linecap="round" stroke-linejoin="round" />
<rect x="1535.6" y="87.4" width="11" height="21" rx="5.5" fill="#83b9ec" stroke="#1664b4" stroke-width="1.2" />
<path d="M1532 102.4 A9.1 9.1 0 0 0 1550 102.4" stroke="#3b3b3b" stroke-width="1.1" fill="none" stroke-linecap="round" stroke-linejoin="round" />
<path d="M1541 111.6 V116.6" stroke="#3b3b3b" stroke-width="1.1" fill="none" stroke-linecap="round" stroke-linejoin="round" />
<path d="M1607 88.5 H1596.6 V115.4 H1616.6 V101" stroke="#1e8ad6" stroke-width="1.1" fill="#f8f8f8" stroke-linecap="round" stroke-linejoin="round" />
<g transform="rotate(45 1606.6 102.8)"><rect x="1600.2" y="100.6" width="12.8" height="4.4" fill="#fff" stroke="#1e8ad6" stroke-width="1"/><rect x="1602" y="102.2" width="9.2" height="1.2" fill="#1e8ad6"/></g>
<g transform="rotate(45 1615 94)"><rect x="1608.4" y="90.8" width="13.2" height="6.4" fill="#fff" stroke="#1e8ad6" stroke-width="1"/><rect x="1608.4" y="94.4" width="13.2" height="2.2" fill="#1e8ad6"/><rect x="1612.6" y="85.6" width="4.8" height="5.2" fill="#fff" stroke="#1e8ad6" stroke-width="1"/></g>
<rect x="1661.5" y="88.6" width="27.4" height="27" rx="0" fill="none" stroke="#d83b01" stroke-width="1.1" />
<rect x="1664.6" y="91.8" width="9.2" height="8.8" rx="0" fill="none" stroke="#d83b01" stroke-width="1.1" />
<rect x="1664.6" y="103.6" width="9.2" height="8.8" rx="0" fill="none" stroke="#d83b01" stroke-width="1.1" />
<rect x="1676.6" y="91.8" width="9.2" height="8.8" rx="0" fill="none" stroke="#d83b01" stroke-width="1.1" />
<rect x="1676.6" y="103.6" width="9.2" height="8.8" rx="0" fill="none" stroke="#d83b01" stroke-width="1.1" />
<path d="M1742.3 97.4 H1748.7" stroke="#185abd" stroke-width="4.6" fill="none" stroke-linecap="round" stroke-linejoin="round" />
<path d="M1736.3 104.5 H1743.7" stroke="#185abd" stroke-width="4.6" fill="none" stroke-linecap="round" stroke-linejoin="round" />
<path d="M1730.8 111.5 H1738.7" stroke="#185abd" stroke-width="4.6" fill="none" stroke-linecap="round" stroke-linejoin="round" />
<path d="M1739.4 87.4 L1743.9 90.9 L1727.4 112.8 L1721 116.6 L1722.5 109.6 Z" stroke="#185abd" stroke-width="1.9" fill="#f9f9f9" stroke-linecap="round" stroke-linejoin="round" />
<path d="M1739.6 87 L1744.2 90.6 L1742.4 93 L1737.8 89.4 Z" stroke="#185abd" stroke-width="1" fill="#185abd" stroke-linecap="round" stroke-linejoin="round" />
<path d="M1720.8 117 L1721.6 113 L1724.4 115 Z" stroke="#185abd" stroke-width="0.8" fill="#185abd" stroke-linecap="round" stroke-linejoin="round" />
<defs>
<linearGradient id="cpl" x1="0" y1="0" x2="0" y2="1"><stop offset="0" stop-color="#1aa0f4"/><stop offset="0.35" stop-color="#2d9fca"/><stop offset="0.65" stop-color="#86b944"/><stop offset="1" stop-color="#fcca00"/></linearGradient>
<linearGradient id="cpr" x1="0.6" y1="0" x2="0.3" y2="1"><stop offset="0" stop-color="#a256f5"/><stop offset="0.5" stop-color="#f0508c"/><stop offset="1" stop-color="#ff9c52"/></linearGradient>
<linearGradient id="cpt" x1="0" y1="0" x2="1" y2="1"><stop offset="0" stop-color="#0d2fc4"/><stop offset="1" stop-color="#1a8af0"/></linearGradient>
<linearGradient id="cpb" x1="0" y1="0" x2="0.6" y2="1"><stop offset="0" stop-color="#ff7a3c"/><stop offset="1" stop-color="#e43a22"/></linearGradient></defs>
<path d="M1783 88.6 H1786.4 C1788.4 88.6 1788.8 90.4 1789.4 92.2 C1790 94 1790.6 95.2 1792.6 95.8 H1786 L1781.6 95.6 Z" fill="url(#cpt)"/>
<path d="M1773.4 107.6 H1779.6 L1780.6 108.6 L1778.6 115.2 H1776.6 C1774.6 115.2 1774.2 113.6 1773.8 112 C1773.4 110.2 1773 108.6 1771 107.9 Z" fill="url(#cpb)"/>
<path d="M1774.6 88.2 H1784.6 L1778.2 106.2 C1777.7 107.6 1776.8 107.9 1775.6 107.9 H1769.6 C1766.8 107.9 1765.8 106 1766.6 103.4 L1770 92.2 C1770.8 89.4 1772.2 88.2 1774.6 88.2 Z" fill="url(#cpl)"/>
<path d="M1787.6 115.2 H1777.6 L1783.8 97.8 C1784.3 96.4 1785.2 95.9 1786.4 95.9 H1792.2 C1795.2 95.9 1796.4 97.8 1795.6 100.4 L1792.2 111.2 C1791.4 114 1790 115.2 1787.6 115.2 Z" fill="url(#cpr)"/>
<path d="M586.2 352.6 H592.4 C593.6 352.6 594.4 353.4 594 354.8 L592.2 361.6 C591.9 362.8 591 363.4 589.8 363.4 H585.2 C583.8 363.4 583.2 362.4 583.6 361 L585.2 354.4 C585.5 353.2 585.6 352.6 586.2 352.6 Z" stroke="#444" stroke-width="1" fill="none" stroke-linecap="round" stroke-linejoin="round" />
<path d="M590.6 355.2 H596.6 C598 355.2 598.6 356.2 598.2 357.6 L596.6 364 C596.3 365.2 595.4 365.8 594.2 365.8 H589.4 C588 365.8 587.4 364.8 587.8 363.4 L589.6 356.6 C589.9 355.6 590 355.2 590.6 355.2 Z" stroke="#444" stroke-width="1" fill="none" stroke-linecap="round" stroke-linejoin="round" />
<defs><linearGradient id="win" x1="0" y1="0" x2="1" y2="1"><stop offset="0" stop-color="#7bd9ff"/><stop offset="1" stop-color="#0f9cf0"/></linearGradient></defs>
<rect x="506.6" y="1044.6" width="11.2" height="11.2" rx="0" fill="url(#win)" stroke="none" stroke-width="1" />
<rect x="506.6" y="1056.6" width="11.2" height="11.2" rx="0" fill="url(#win)" stroke="none" stroke-width="1" />
<rect x="518.6" y="1044.6" width="11.2" height="11.2" rx="0" fill="url(#win)" stroke="none" stroke-width="1" />
<rect x="518.6" y="1056.6" width="11.2" height="11.2" rx="0" fill="url(#win)" stroke="none" stroke-width="1" />
<circle cx="561.4" cy="1055" r="5.4" fill="none" stroke="#2b2b2b" stroke-width="1.6" />
<path d="M565.4 1059.2 L568.6 1062.6" stroke="#2b2b2b" stroke-width="1.8" fill="none" stroke-linecap="round" stroke-linejoin="round" />
<rect x="712.2" y="1051.2" width="4.5" height="4.5" rx="0" fill="#f25022" stroke="none" stroke-width="1" />
<rect x="717.2" y="1051.2" width="4.5" height="4.5" rx="0" fill="#7fba00" stroke="none" stroke-width="1" />
<rect x="712.2" y="1056.2" width="4.5" height="4.5" rx="0" fill="#00a4ef" stroke="none" stroke-width="1" />
<rect x="717.2" y="1056.2" width="4.5" height="4.5" rx="0" fill="#ffb900" stroke="none" stroke-width="1" />
<defs><linearGradient id="e787a" x1="0" y1="0" x2="1" y2="1"><stop offset="0" stop-color="#35c1f1"/><stop offset="1" stop-color="#0c59a4"/></linearGradient>
<linearGradient id="e787b" x1="0" y1="1" x2="1" y2="0"><stop offset="0" stop-color="#2ab6e0"/><stop offset="0.6" stop-color="#4fd86a"/><stop offset="1" stop-color="#7de04a"/></linearGradient></defs>
<circle cx="787" cy="1056" r="12" fill="url(#e787a)"/>
<path d="M776 1053 C778 1046 784 1044 788 1044 C795 1044 799 1049 799 1055 C799 1059 796 1061.5 792.5 1061.5 C790 1061.5 788.5 1060.5 789.5 1058.5 C791.5 1055 789 1051 784.5 1051 C780.5 1051 777 1052 776 1053 Z" fill="url(#e787b)"/>
<path d="M789.2 1059.4 C790.6 1056.6 789.4 1053.6 786.6 1053.4 C784.6 1053.4 783.2 1055 783.6 1057.4 C784.2 1061.4 788 1064.6 793.6 1063.6 C795.4 1063.2 797 1062.2 797.8 1061 C795 1062.4 790 1062.4 789.2 1059.4 Z" fill="#2a2321"/>
<path d="M797.8 1061 C794.5 1067.5 784 1069.5 778.4 1063.8 C781.5 1066.8 787 1067.4 791.4 1065 C786 1065.6 783.4 1061 783.6 1057.4 C784.2 1061.4 788 1064.6 793.6 1063.6 C795.4 1063.2 797 1062.2 797.8 1061 Z" fill="#1060b8"/>
<rect x="775.2" y="1060" width="11.6" height="8" rx="0.8" fill="#d9820c" stroke="none" stroke-width="0" />
<rect x="775.2" y="1060" width="11.6" height="3.6" rx="0.8" fill="#efa11c" stroke="none" stroke-width="0" />
<path d="M779.2 1060 V1058.8 H782.8 V1060" stroke="#b96a08" stroke-width="1" fill="none" stroke-linecap="round" stroke-linejoin="round" />
<rect x="780.4" y="1063" width="1.2" height="1.2" rx="0" fill="#ffe07a" stroke="none" stroke-width="1" />
<rect x="784.0" y="1072.3" width="6" height="2.6" rx="1.3" fill="#9b9b9b" stroke="none" stroke-width="0" />
<path d="M819.4 1047 A1.6 1.6 0 0 1 821 1045.2 H827 L829.4 1047.4 H841.4 A1.6 1.6 0 0 1 843 1049 V1051 H819.4 Z" stroke="none" stroke-width="0" fill="#e8a600" stroke-linecap="round" stroke-linejoin="round" />
<defs><linearGradient id="fld" x1="0" y1="0" x2="0" y2="1"><stop offset="0" stop-color="#ffd965"/><stop offset="1" stop-color="#f6bb1c"/></linearGradient></defs>
<path d="M819.4 1049.4 H828.6 L830.6 1047.4 H841.6 A1.6 1.6 0 0 1 843.2 1049 V1064.8 A1.6 1.6 0 0 1 841.6 1066.4 H821 A1.6 1.6 0 0 1 819.4 1064.8 Z" stroke="none" stroke-width="0" fill="url(#fld)" stroke-linecap="round" stroke-linejoin="round" />
<path d="M823.6 1066.4 V1061.6 A1.6 1.6 0 0 1 825.2 1060 H836.4 A1.6 1.6 0 0 1 838 1061.6 V1066.4 Z" stroke="none" stroke-width="0" fill="#1f8fe0" stroke-linecap="round" stroke-linejoin="round" />
<rect x="826.6" y="1062.4" width="10" height="1.4" rx="0.7" fill="#0f6cbd" stroke="none" stroke-width="0" />
<rect x="828.0" y="1072.3" width="6" height="2.6" rx="1.3" fill="#9b9b9b" stroke="none" stroke-width="0" />
<rect x="869.2" y="1045" width="17.8" height="22" rx="1.2" fill="#ca64ea" stroke="none" stroke-width="0" />
<rect x="881.2" y="1050.4" width="5.8" height="5.6" rx="0" fill="#ae4bd5" stroke="none" stroke-width="1" />
<rect x="881.2" y="1056" width="5.8" height="5.6" rx="0" fill="#9332bf" stroke="none" stroke-width="1" />
<rect x="881.2" y="1061.6" width="5.8" height="5.4" rx="0" fill="#7719aa" stroke="none" stroke-width="1" />
<rect x="863" y="1049.2" width="14.4" height="14" rx="1" fill="#7719aa" stroke="none" stroke-width="0" />
<text x="870.2" y="1060.4" font-family="Liberation Sans, sans-serif" font-size="11.5" font-weight="700" fill="#fff" text-anchor="middle" >N</text>
<rect x="872.0" y="1072.3" width="6" height="2.6" rx="1.3" fill="#9b9b9b" stroke="none" stroke-width="0" />
<rect x="913" y="1045" width="18" height="21.4" rx="1.2" fill="#28a8ea" stroke="none" stroke-width="0" />
<path d="M913 1056 L922 1062 L931 1056 V1066.4 H913 Z" stroke="none" stroke-width="0" fill="#0f6cbd" stroke-linecap="round" stroke-linejoin="round" />
<path d="M913 1066.4 L931 1056 V1066.4 Z" stroke="none" stroke-width="0" fill="#1490df" stroke-linecap="round" stroke-linejoin="round" />
<rect x="917" y="1045" width="14" height="6" rx="0" fill="#0a5ea8" stroke="none" stroke-width="1" />
<rect x="907" y="1050" width="12.2" height="11.8" rx="1" fill="#0f6cbd" stroke="none" stroke-width="0" />
<text x="913.1" y="1060" font-family="Liberation Sans, sans-serif" font-size="10.5" font-weight="700" fill="#fff" text-anchor="middle" >O</text>
<circle cx="927.9" cy="1046.8" r="8" fill="#4cc2ff" stroke="none" stroke-width="1" />
<rect x="923.4" y="1043.6" width="9" height="6.4" rx="0.8" fill="none" stroke="#10222e" stroke-width="1" />
<path d="M923.6 1044.2 L927.9 1047.4 L932.2 1044.2" stroke="#10222e" stroke-width="1" fill="none" stroke-linecap="round" stroke-linejoin="round" />
<rect x="916.0" y="1072.3" width="6" height="2.6" rx="1.3" fill="#f48fa0" stroke="none" stroke-width="0" />
<defs><linearGradient id="e963a" x1="0" y1="0" x2="1" y2="1"><stop offset="0" stop-color="#35c1f1"/><stop offset="1" stop-color="#0c59a4"/></linearGradient>
<linearGradient id="e963b" x1="0" y1="1" x2="1" y2="0"><stop offset="0" stop-color="#2ab6e0"/><stop offset="0.6" stop-color="#4fd86a"/><stop offset="1" stop-color="#7de04a"/></linearGradient></defs>
<circle cx="963" cy="1056" r="12" fill="url(#e963a)"/>
<path d="M952 1053 C954 1046 960 1044 964 1044 C971 1044 975 1049 975 1055 C975 1059 972 1061.5 968.5 1061.5 C966 1061.5 964.5 1060.5 965.5 1058.5 C967.5 1055 965 1051 960.5 1051 C956.5 1051 953 1052 952 1053 Z" fill="url(#e963b)"/>
<path d="M965.2 1059.4 C966.6 1056.6 965.4 1053.6 962.6 1053.4 C960.6 1053.4 959.2 1055 959.6 1057.4 C960.2 1061.4 964 1064.6 969.6 1063.6 C971.4 1063.2 973 1062.2 973.8 1061 C971 1062.4 966 1062.4 965.2 1059.4 Z" fill="#2a2321"/>
<path d="M973.8 1061 C970.5 1067.5 960 1069.5 954.4 1063.8 C957.5 1066.8 963 1067.4 967.4 1065 C962 1065.6 959.4 1061 959.6 1057.4 C960.2 1061.4 964 1064.6 969.6 1063.6 C971.4 1063.2 973 1062.2 973.8 1061 Z" fill="#1060b8"/>
<circle cx="956.8" cy="1061.8" r="5.7" fill="#dcdad8" stroke="none" stroke-width="1" />
<circle cx="956.8" cy="1060.2" r="2" fill="#9a9896" stroke="none" stroke-width="1" />
<path d="M953.2 1065.6 C953.6 1062.6 960 1062.6 960.4 1065.6 Z" stroke="none" stroke-width="0" fill="#9a9896" stroke-linecap="round" stroke-linejoin="round" />
<rect x="960.0" y="1072.3" width="6" height="2.6" rx="1.3" fill="#9b9b9b" stroke="none" stroke-width="0" />
<rect x="996.8" y="1044.3" width="6.2" height="3.4" rx="0" fill="#8ab8f8" stroke="none" stroke-width="1" />
<rect x="1003" y="1049" width="6.4" height="3.4" rx="0" fill="#5a98e8" stroke="none" stroke-width="1" />
<rect x="996.8" y="1053.4" width="6.2" height="3.4" rx="0" fill="#1a78d8" stroke="none" stroke-width="1" />
<rect x="1009.9" y="1052.9" width="7.2" height="4.7" rx="0" fill="#fff" stroke="none" stroke-width="1" />
<rect x="1003.6" y="1058.3" width="6.3" height="3.7" rx="0" fill="#fff" stroke="none" stroke-width="1" />
<rect x="1010.4" y="1058.5" width="6" height="3.3" rx="0" fill="#6aa8f0" stroke="none" stroke-width="1" />
<rect x="996.8" y="1062.7" width="20.6" height="5.2" rx="0" fill="#e4e0d8" stroke="none" stroke-width="1" />
<rect x="997.8" y="1063.6" width="5.4" height="3.4" rx="0" fill="#0a5cb8" stroke="none" stroke-width="1" />
<rect x="1004.4" y="1063.6" width="5.4" height="3.4" rx="0" fill="#0a5cb8" stroke="none" stroke-width="1" />
<rect x="1011" y="1063.6" width="5.4" height="3.4" rx="0" fill="#0a5cb8" stroke="none" stroke-width="1" />
<rect x="1004.0" y="1072.3" width="6" height="2.6" rx="1.3" fill="#9b9b9b" stroke="none" stroke-width="0" />
<path d="M1056.4 1044.2 L1062.8 1047.2 V1064.8 L1056.4 1067.8 Z" stroke="none" stroke-width="0" fill="#23a9f2" stroke-linecap="round" stroke-linejoin="round" />
<path d="M1056.6 1044.2 L1040 1059.6 L1042.2 1062 L1056.6 1051 Z" stroke="none" stroke-width="0" fill="#0078c8" stroke-linecap="round" stroke-linejoin="round" />
<path d="M1056.6 1067.8 L1040 1052.4 L1042.2 1050 L1056.6 1061 Z" stroke="none" stroke-width="0" fill="#0a8ad8" stroke-linecap="round" stroke-linejoin="round" />
<rect x="1048.0" y="1072.3" width="6" height="2.6" rx="1.3" fill="#9b9b9b" stroke="none" stroke-width="0" />
<rect x="1082.9" y="1046.8" width="24.1" height="18.1" rx="1.2" fill="#3b3b3b" stroke="none" stroke-width="0" />
<rect x="1082.9" y="1046.8" width="8" height="3" rx="0" fill="#d0d0d0" stroke="none" stroke-width="1" />
<rect x="1090.9" y="1046.8" width="8" height="3" rx="0" fill="#a8a8a8" stroke="none" stroke-width="1" />
<rect x="1098.9" y="1046.8" width="8.1" height="3" rx="0" fill="#808080" stroke="none" stroke-width="1" />
<path d="M1086.6 1052.8 L1090.6 1056.4 L1086.6 1060" stroke="#cfcfcf" stroke-width="1.8" fill="none" stroke-linecap="round" stroke-linejoin="round" stroke-linecap="butt"/>
<path d="M1094 1061 H1100.6" stroke="#fff" stroke-width="1.8" fill="none" stroke-linecap="round" stroke-linejoin="round" stroke-linecap="butt"/>
<rect x="1092.0" y="1072.3" width="6" height="2.6" rx="1.3" fill="#9b9b9b" stroke="none" stroke-width="0" />
<rect x="1128.8" y="1045.8" width="19.8" height="19.8" rx="0" fill="#5a5856" stroke="#f0e6cc" stroke-width="1.8" />
<rect x="1133" y="1048.9" width="3" height="8.2" rx="0" fill="#e8501a" stroke="none" stroke-width="1" />
<rect x="1136" y="1048.9" width="3" height="8.2" rx="0" fill="#ffcc00" stroke="none" stroke-width="1" />
<rect x="1139" y="1048.9" width="3" height="8.2" rx="0" fill="#3ab83a" stroke="none" stroke-width="1" />
<rect x="1142" y="1048.9" width="3" height="8.2" rx="0" fill="#1a8ae0" stroke="none" stroke-width="1" />
<rect x="1132.8" y="1059.5" width="2.8" height="3.2" rx="0" fill="#f0e6cc" stroke="none" stroke-width="1" />
<rect x="1137.3" y="1059.5" width="2.8" height="3.2" rx="0" fill="#f0e6cc" stroke="none" stroke-width="1" />
<rect x="1142" y="1059.5" width="2.8" height="3.2" rx="0" fill="#f0e6cc" stroke="none" stroke-width="1" />
<rect x="1136.0" y="1072.3" width="6" height="2.6" rx="1.3" fill="#9b9b9b" stroke="none" stroke-width="0" />
<path d="M1183 1045.6 C1186 1047.6 1189 1048.4 1192 1048.4 V1056 C1192 1061 1188 1064.4 1183 1066.4 C1178 1064.4 1174 1061 1174 1056 V1048.4 C1177 1048.4 1180 1047.6 1183 1045.6 Z" stroke="none" stroke-width="0" fill="#cc2030" stroke-linecap="round" stroke-linejoin="round" />
<path d="M1183 1049.6 V1053.4 M1181.4 1051.8 L1183 1053.6 L1184.6 1051.8 M1183 1063 V1059.2 M1181.4 1060.8 L1183 1059 L1184.6 1060.8 M1176.2 1056.2 H1180 M1178.4 1054.6 L1180.2 1056.2 L1178.4 1057.8 M1189.8 1056.2 H1186 M1187.6 1054.6 L1185.8 1056.2 L1187.6 1057.8" stroke="#fff" stroke-width="1.3" fill="none" stroke-linecap="round" stroke-linejoin="round" />
<circle cx="1191.9" cy="1046.8" r="8" fill="#088a1c" stroke="none" stroke-width="1" />
<rect x="1180.0" y="1072.3" width="6" height="2.6" rx="1.3" fill="#9b9b9b" stroke="none" stroke-width="0" />
<defs><linearGradient id="m1" x1="0" y1="0" x2="0" y2="1"><stop offset="0" stop-color="#8a7af0"/><stop offset="1" stop-color="#3a7ae0"/></linearGradient>
<linearGradient id="m2" x1="0" y1="0" x2="1" y2="1"><stop offset="0" stop-color="#3a8af0"/><stop offset="1" stop-color="#3ad0f4"/></linearGradient>
<linearGradient id="m3" x1="0" y1="0" x2="1" y2="0"><stop offset="0" stop-color="#c88af4"/><stop offset="1" stop-color="#7a4ad0"/></linearGradient></defs>
<path d="M1227 1045 L1236.4 1050.4 V1061.4 L1227 1067 L1217.4 1061.4 V1050.4 Z" fill="url(#m1)"/>
<path d="M1227 1045 L1236.6 1050.4 V1057.6 L1230 1053.4 C1228 1052.2 1226 1052.4 1224.6 1053.4 L1224.6 1047 Z" fill="url(#m2)"/>
<path d="M1236.6 1055 V1061.4 L1227 1067 L1220 1063 L1230.6 1057.6 C1232 1056.8 1232.4 1055.6 1232 1054.2 Z" fill="url(#m3)"/>
<circle cx="1227.4" cy="1056" r="3.2" fill="#2a2321"/>
<rect x="1224.0" y="1072.3" width="6" height="2.6" rx="1.3" fill="#9b9b9b" stroke="none" stroke-width="0" />
<circle cx="1273.1" cy="1055.7" r="10.2" fill="#ed6c47" stroke="none" stroke-width="1" />
<path d="M1273.1 1045.5 A10.2 10.2 0 0 1 1283.3 1055.7 H1273.1 Z" stroke="none" stroke-width="0" fill="#ff8f6b" stroke-linecap="round" stroke-linejoin="round" />
<path d="M1283.3 1055.7 A10.2 10.2 0 0 1 1273.1 1065.9 V1055.7 Z" stroke="none" stroke-width="0" fill="#d35230" stroke-linecap="round" stroke-linejoin="round" />
<rect x="1259" y="1050" width="12.2" height="11.8" rx="1" fill="#c43e1c" stroke="none" stroke-width="0" />
<text x="1265.1" y="1060" font-family="Liberation Sans, sans-serif" font-size="10.5" font-weight="700" fill="#fff" text-anchor="middle" >P</text>
<rect x="1268.0" y="1072.3" width="6" height="2.6" rx="1.3" fill="#9b9b9b" stroke="none" stroke-width="0" />
<defs><linearGradient id="e1315a" x1="0" y1="0" x2="1" y2="1"><stop offset="0" stop-color="#35c1f1"/><stop offset="1" stop-color="#0c59a4"/></linearGradient>
<linearGradient id="e1315b" x1="0" y1="1" x2="1" y2="0"><stop offset="0" stop-color="#2ab6e0"/><stop offset="0.6" stop-color="#4fd86a"/><stop offset="1" stop-color="#7de04a"/></linearGradient></defs>
<circle cx="1315" cy="1056" r="12" fill="url(#e1315a)"/>
<path d="M1304 1053 C1306 1046 1312 1044 1316 1044 C1323 1044 1327 1049 1327 1055 C1327 1059 1324 1061.5 1320.5 1061.5 C1318 1061.5 1316.5 1060.5 1317.5 1058.5 C1319.5 1055 1317 1051 1312.5 1051 C1308.5 1051 1305 1052 1304 1053 Z" fill="url(#e1315b)"/>
<path d="M1317.2 1059.4 C1318.6 1056.6 1317.4 1053.6 1314.6 1053.4 C1312.6 1053.4 1311.2 1055 1311.6 1057.4 C1312.2 1061.4 1316 1064.6 1321.6 1063.6 C1323.4 1063.2 1325 1062.2 1325.8 1061 C1323 1062.4 1318 1062.4 1317.2 1059.4 Z" fill="#2a2321"/>
<path d="M1325.8 1061 C1322.5 1067.5 1312 1069.5 1306.4 1063.8 C1309.5 1066.8 1315 1067.4 1319.4 1065 C1314 1065.6 1311.4 1061 1311.6 1057.4 C1312.2 1061.4 1316 1064.6 1321.6 1063.6 C1323.4 1063.2 1325 1062.2 1325.8 1061 Z" fill="#1060b8"/>
<circle cx="1308.8" cy="1061.8" r="5.7" fill="#dcdad8" stroke="none" stroke-width="1" />
<circle cx="1308.8" cy="1060.2" r="2" fill="#9a9896" stroke="none" stroke-width="1" />
<path d="M1305.2 1065.6 C1305.6 1062.6 1312 1062.6 1312.4 1065.6 Z" stroke="none" stroke-width="0" fill="#9a9896" stroke-linecap="round" stroke-linejoin="round" />
<rect x="1312.0" y="1072.3" width="6" height="2.6" rx="1.3" fill="#9b9b9b" stroke="none" stroke-width="0" />
<circle cx="1359.2" cy="1048.6" r="3" fill="#7b83eb" stroke="none" stroke-width="1" />
<circle cx="1366.6" cy="1050.2" r="2.3" fill="#5b62d0" stroke="none" stroke-width="1" />
<path d="M1354.6 1052.2 H1364 A1.2 1.2 0 0 1 1365.2 1053.4 V1060.4 A5.6 5.6 0 0 1 1354 1060.4 Z" stroke="none" stroke-width="0" fill="#7b83eb" stroke-linecap="round" stroke-linejoin="round" />
<path d="M1365.6 1053.2 H1369.6 A1.1 1.1 0 0 1 1370.7 1054.3 V1059.6 A3.6 3.6 0 0 1 1365.6 1062.8 Z" stroke="none" stroke-width="0" fill="#5b62d0" stroke-linecap="round" stroke-linejoin="round" />
<rect x="1347.2" y="1050" width="11.4" height="11.8" rx="1" fill="#4b53bc" stroke="none" stroke-width="0" />
<text x="1352.9" y="1059.8" font-family="Liberation Sans, sans-serif" font-size="10" font-weight="700" fill="#fff" text-anchor="middle" >T</text>
<circle cx="1368" cy="1046.8" r="8" fill="#c42b1c" stroke="none" stroke-width="1" />
<text x="1368" y="1051.2" font-family="Liberation Sans, sans-serif" font-size="12" font-weight="400" fill="#fff" text-anchor="middle" >1</text>
<rect x="1356.0" y="1072.3" width="6" height="2.6" rx="1.3" fill="#9b9b9b" stroke="none" stroke-width="0" />
<rect x="1397" y="1045" width="18.2" height="21.6" rx="1.2" fill="#2b7cd3" stroke="none" stroke-width="0" />
<rect x="1397" y="1045" width="18.2" height="5.6" rx="1.2" fill="#41a5ee" stroke="none" stroke-width="0" />
<rect x="1397" y="1048" width="18.2" height="2.6" rx="0" fill="#41a5ee" stroke="none" stroke-width="1" />
<rect x="1397" y="1055.8" width="18.2" height="5.4" rx="0" fill="#185abd" stroke="none" stroke-width="1" />
<rect x="1397" y="1061.2" width="18.2" height="5.4" rx="1.2" fill="#103f91" stroke="none" stroke-width="0" />
<rect x="1397" y="1061.2" width="18.2" height="2.6" rx="0" fill="#103f91" stroke="none" stroke-width="1" />
<rect x="1391.1" y="1050" width="12" height="11.8" rx="1" fill="#185abd" stroke="none" stroke-width="0" />
<text x="1397.1" y="1059.8" font-family="Liberation Sans, sans-serif" font-size="10" font-weight="700" fill="#fff" text-anchor="middle" >W</text>
<rect x="1395.1" y="1072.1" width="16" height="2.8" rx="1.4" fill="#4cc2ff" stroke="none" stroke-width="0" />
<path d="M1596.8 1058.8 L1602 1053.2 L1607.2 1058.8" stroke="#fff" stroke-width="1.5" fill="none" stroke-linecap="round" stroke-linejoin="round" />
<rect x="1626.7" y="1050.8" width="15" height="9" rx="0.8" fill="none" stroke="#fff" stroke-width="1.1" />
<path d="M1627 1062 H1641.6" stroke="#fff" stroke-width="1.1" fill="none" stroke-linecap="round" stroke-linejoin="round" />
<path d="M1634.2 1052.6 L1637.4 1056 H1635.4 V1058.4 H1633 V1056 H1631 Z" stroke="none" stroke-width="0" fill="#fff" stroke-linecap="round" stroke-linejoin="round" />
<path d="M1661.4 1061.2 A3.4 3.4 0 0 1 1661.6 1054.6 A4.8 4.8 0 0 1 1670.4 1054.4 A3.5 3.5 0 0 1 1670.8 1061.2 Z" stroke="none" stroke-width="0" fill="#0a7ad8" stroke-linecap="round" stroke-linejoin="round" />
<path d="M1661.6 1054.6 A4.8 4.8 0 0 1 1670.4 1054.4 L1663 1061.2 H1661.4 A3.4 3.4 0 0 1 1661.6 1054.6 Z" stroke="none" stroke-width="0" fill="#2a9df0" stroke-linecap="round" stroke-linejoin="round" />
<path d="M1737.4 1055 A9.4 9.4 0 0 1 1749.6 1055" stroke="#fff" stroke-width="1.2" fill="none" stroke-linecap="round" stroke-linejoin="round" />
<path d="M1739.4 1057.6 A6.2 6.2 0 0 1 1747.6 1057.6" stroke="#fff" stroke-width="1.2" fill="none" stroke-linecap="round" stroke-linejoin="round" />
<path d="M1741.4 1060 A3.2 3.2 0 0 1 1745.6 1060" stroke="#fff" stroke-width="1.2" fill="none" stroke-linecap="round" stroke-linejoin="round" />
<circle cx="1743.5" cy="1061.6" r="0.9" fill="#fff" stroke="none" stroke-width="1" />
<path d="M1737.6 1049.6 L1740.6 1050.8 V1054 C1740.6 1055.6 1739.4 1056.8 1737.6 1057.6 C1735.8 1056.8 1734.6 1055.6 1734.6 1054 V1050.8 Z" stroke="#2a2321" stroke-width="0.8" fill="#2a9df0" stroke-linecap="round" stroke-linejoin="round" />
<path d="M1758.4 1054.4 H1761 L1764.6 1051.2 V1061.8 L1761 1058.6 H1758.4 Z" stroke="#fff" stroke-width="1.1" fill="none" stroke-linecap="round" stroke-linejoin="round" />
<path d="M1766.8 1054.4 A3 3 0 0 1 1766.8 1058.6" stroke="#fff" stroke-width="1.1" fill="none" stroke-linecap="round" stroke-linejoin="round" />
<path d="M1768.8 1052.4 A5.8 5.8 0 0 1 1768.8 1060.6" stroke="#fff" stroke-width="1.1" fill="none" stroke-linecap="round" stroke-linejoin="round" />
<path d="M1771 1050.6 A8.6 8.6 0 0 1 1771 1062.4" stroke="#8a8684" stroke-width="1" fill="none" stroke-linecap="round" stroke-linejoin="round" />
<rect x="1783.6" y="1052.6" width="12.6" height="7" rx="1.4" fill="#e4e4e4" stroke="#fff" stroke-width="1.1" />
<path d="M1797.4 1054.6 V1057.6" stroke="#fff" stroke-width="1.3" fill="none" stroke-linecap="round" stroke-linejoin="round" />
<path d="M1782 1049 L1785.4 1052.6 M1784.4 1049 V1052.4 H1781.4" stroke="#fff" stroke-width="1.1" fill="none" stroke-linecap="round" stroke-linejoin="round" />
<path d="M1892 1048.8 A5.4 5.4 0 0 1 1897.4 1054.2 V1058 L1899.2 1061.2 H1884.8 L1886.6 1058 V1054.2 A5.4 5.4 0 0 1 1892 1048.8 Z" stroke="none" stroke-width="0" fill="#8ee0f8" stroke-linecap="round" stroke-linejoin="round" />
<path d="M1889.6 1062.4 A2.4 2.2 0 0 0 1894.4 1062.4 Z" stroke="none" stroke-width="0" fill="#8ee0f8" stroke-linecap="round" stroke-linejoin="round" />
<rect x="1445.5" y="1015.5" width="11" height="8" rx="0" fill="none" stroke="#3b3b3b" stroke-width="1" />
<circle cx="1455" cy="1024" r="3.4" fill="#f5f5f5" stroke="#3b3b3b" stroke-width="1" />
<circle cx="1455" cy="1024" r="1.1" fill="none" stroke="#3b3b3b" stroke-width="0.9" />
<path d="M1455 1019.6 V1020.8 M1455 1027.2 V1028.4 M1450.8 1021.8 L1451.9 1022.4 M1458.1 1025.6 L1459.2 1026.2 M1450.8 1026.2 L1451.9 1025.6 M1458.1 1022.4 L1459.2 1021.8" stroke="#3b3b3b" stroke-width="1.1" fill="none" stroke-linecap="round" stroke-linejoin="round" />
<path d="M1561.5 1018 V1015.5 H1564 M1572 1015.5 H1574.5 V1018 M1574.5 1025 V1027.5 H1572 M1564 1027.5 H1561.5 V1025" stroke="#3b3b3b" stroke-width="1" fill="none" stroke-linecap="round" stroke-linejoin="round" />
<path d="M1564.5 1017.5 H1569 L1571.5 1020 V1026.5 H1564.5 Z M1569 1017.5 V1020 H1571.5" stroke="#3b3b3b" stroke-width="1" fill="none" stroke-linecap="round" stroke-linejoin="round" />
<path d="M1639.5 1016.5 V1026 M1634 1015.5 H1639.5 H1645 V1026.5 H1639.5 H1634 Z" stroke="#3b3b3b" stroke-width="1" fill="none" stroke-linecap="round" stroke-linejoin="round" />
<path d="M1635.6 1018.5 H1638 M1635.6 1020.5 H1638 M1635.6 1022.5 H1638 M1641 1018.5 H1643.4 M1641 1020.5 H1643.4 M1641 1022.5 H1643.4" stroke="#3b3b3b" stroke-width="0.9" fill="none" stroke-linecap="round" stroke-linejoin="round" />
<rect x="1674.5" y="1015.5" width="10" height="12" rx="0" fill="none" stroke="#3b3b3b" stroke-width="1" />
<path d="M1676.5 1018.5 H1682.5 M1676.5 1020.5 H1682.5 M1676.5 1022.5 H1682.5 M1676.5 1024.5 H1682.5" stroke="#3b3b3b" stroke-width="0.9" fill="none" stroke-linecap="round" stroke-linejoin="round" />
<path d="M1721 1027.5 H1714.5 V1015.5 H1725.5 V1020" stroke="#3b3b3b" stroke-width="1" fill="none" stroke-linecap="round" stroke-linejoin="round" />
<path d="M1716.5 1018.5 H1723.5 M1716.5 1020.5 H1721 M1716.5 1022.5 H1719.5" stroke="#3b3b3b" stroke-width="0.9" fill="none" stroke-linecap="round" stroke-linejoin="round" />
<circle cx="1723.6" cy="1024.4" r="3.6" fill="#f5f5f5" stroke="#3b3b3b" stroke-width="1" />
<path d="M1720 1024.4 H1727.2 M1723.6 1020.8 V1028 M1723.6 1020.8 C1721.6 1023 1721.6 1026 1723.6 1028 C1725.6 1026 1725.6 1023 1723.6 1020.8" stroke="#3b3b3b" stroke-width="0.7" fill="none" stroke-linecap="round" stroke-linejoin="round" /></svg>
</div></body></html>
